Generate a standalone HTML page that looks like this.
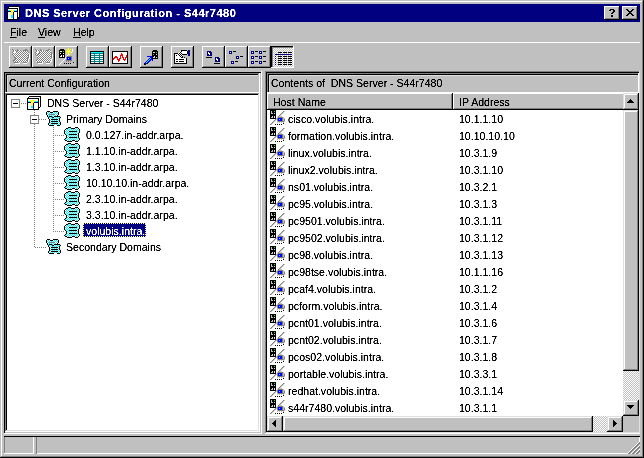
<!DOCTYPE html>
<html><head><meta charset="utf-8"><style>
html,body{margin:0;padding:0}
body{width:644px;height:458px;background:#c0c0c0;position:relative;overflow:hidden;font-family:"Liberation Sans",sans-serif}
body div,body span.t,body svg{position:absolute}
span.t{white-space:pre;line-height:normal;transform-origin:0 0;font-family:"Liberation Sans",sans-serif}
</style></head><body>
<svg style="left:0;top:0" width="0" height="0"><defs><pattern id="px0" width="2" height="2" patternUnits="userSpaceOnUse"><rect width="2" height="2" fill="#ffffff"/><rect width="1" height="1" fill="#00ffff"/><rect x="1" y="1" width="1" height="1" fill="#00ffff"/></pattern><pattern id="px1" width="2" height="2" patternUnits="userSpaceOnUse"><rect width="2" height="2" fill="#00ffff"/><rect width="1" height="1" fill="#ffffff"/><rect x="1" y="1" width="1" height="1" fill="#ffffff"/></pattern><pattern id="pz0" width="2" height="2" patternUnits="userSpaceOnUse"><rect width="2" height="2" fill="#c0c0c0"/><rect width="1" height="1" fill="#808080"/><rect x="1" y="1" width="1" height="1" fill="#808080"/></pattern><pattern id="pz1" width="2" height="2" patternUnits="userSpaceOnUse"><rect width="2" height="2" fill="#808080"/><rect width="1" height="1" fill="#c0c0c0"/><rect x="1" y="1" width="1" height="1" fill="#c0c0c0"/></pattern><pattern id="pq0" width="2" height="2" patternUnits="userSpaceOnUse"><rect width="2" height="2" fill="#ffffff"/><rect width="1" height="1" fill="#000000"/><rect x="1" y="1" width="1" height="1" fill="#000000"/></pattern><pattern id="pq1" width="2" height="2" patternUnits="userSpaceOnUse"><rect width="2" height="2" fill="#000000"/><rect width="1" height="1" fill="#ffffff"/><rect x="1" y="1" width="1" height="1" fill="#ffffff"/></pattern><pattern id="pm0" width="2" height="2" patternUnits="userSpaceOnUse"><rect width="2" height="2" fill="#ffffff"/><rect width="1" height="1" fill="#808080"/><rect x="1" y="1" width="1" height="1" fill="#808080"/></pattern><pattern id="pm1" width="2" height="2" patternUnits="userSpaceOnUse"><rect width="2" height="2" fill="#808080"/><rect width="1" height="1" fill="#ffffff"/><rect x="1" y="1" width="1" height="1" fill="#ffffff"/></pattern><pattern id="pW0" width="2" height="2" patternUnits="userSpaceOnUse"><rect width="2" height="2" fill="#c0c0c0"/><rect width="1" height="1" fill="#ffffff"/><rect x="1" y="1" width="1" height="1" fill="#ffffff"/></pattern><pattern id="pW1" width="2" height="2" patternUnits="userSpaceOnUse"><rect width="2" height="2" fill="#ffffff"/><rect width="1" height="1" fill="#c0c0c0"/><rect x="1" y="1" width="1" height="1" fill="#c0c0c0"/></pattern></defs></svg>
<svg style="left:0;top:0" width="0" height="0" shape-rendering="crispEdges"><defs><g id="s0"><rect x="0" y="0" width="1" height="1" fill="#808080"/><rect x="5" y="0" width="1" height="1" fill="#808080"/><rect x="13" y="0" width="2" height="1" fill="#808080"/><rect x="1" y="1" width="1" height="1" fill="#808080"/><rect x="2" y="1" width="1" height="1" fill="#ffffff"/><rect x="3" y="1" width="1" height="1" fill="#808080"/><rect x="5" y="1" width="2" height="1" fill="#808080"/><rect x="7" y="1" width="1" height="1" fill="#ffffff"/><rect x="8" y="1" width="1" height="1" fill="#808080"/><rect x="11" y="1" width="3" height="1" fill="#808080"/><rect x="14" y="1" width="1" height="1" fill="url(#pm1)"/><rect x="15" y="1" width="1" height="1" fill="#808080"/><rect x="1" y="2" width="1" height="1" fill="#808080"/><rect x="2" y="2" width="2" height="1" fill="#ffffff"/><rect x="4" y="2" width="1" height="1" fill="#808080"/><rect x="5" y="2" width="11" height="1" fill="url(#pm1)"/><rect x="0" y="3" width="1" height="1" fill="#808080"/><rect x="1" y="3" width="3" height="1" fill="#ffffff"/><rect x="4" y="3" width="1" height="1" fill="#808080"/><rect x="5" y="3" width="11" height="1" fill="url(#pm1)"/><rect x="16" y="3" width="1" height="1" fill="#808080"/><rect x="1" y="4" width="1" height="1" fill="#808080"/><rect x="2" y="4" width="1" height="1" fill="#ffffff"/><rect x="3" y="4" width="1" height="1" fill="#808080"/><rect x="4" y="4" width="13" height="1" fill="url(#pm1)"/><rect x="0" y="5" width="1" height="1" fill="#808080"/><rect x="1" y="5" width="1" height="1" fill="#ffffff"/><rect x="2" y="5" width="1" height="1" fill="#808080"/><rect x="3" y="5" width="13" height="1" fill="url(#pm1)"/><rect x="16" y="5" width="1" height="1" fill="#808080"/><rect x="17" y="5" width="1" height="1" fill="#ffffff"/><rect x="1" y="6" width="1" height="1" fill="#808080"/><rect x="2" y="6" width="14" height="1" fill="url(#pm1)"/><rect x="16" y="6" width="1" height="1" fill="#808080"/><rect x="17" y="6" width="1" height="1" fill="#ffffff"/><rect x="2" y="7" width="14" height="1" fill="url(#pm1)"/><rect x="16" y="7" width="1" height="1" fill="#808080"/><rect x="17" y="7" width="1" height="1" fill="#ffffff"/><rect x="2" y="8" width="1" height="1" fill="#808080"/><rect x="3" y="8" width="13" height="1" fill="url(#pm1)"/><rect x="16" y="8" width="1" height="1" fill="#808080"/><rect x="17" y="8" width="1" height="1" fill="#ffffff"/><rect x="3" y="9" width="1" height="1" fill="#808080"/><rect x="4" y="9" width="11" height="1" fill="url(#pm1)"/><rect x="15" y="9" width="1" height="1" fill="#808080"/><rect x="17" y="9" width="1" height="1" fill="#ffffff"/><rect x="2" y="10" width="1" height="1" fill="#808080"/><rect x="3" y="10" width="13" height="1" fill="url(#pm1)"/><rect x="16" y="10" width="1" height="1" fill="#ffffff"/><rect x="1" y="11" width="1" height="1" fill="#808080"/><rect x="2" y="11" width="13" height="1" fill="url(#pm1)"/><rect x="15" y="11" width="1" height="1" fill="#808080"/><rect x="16" y="11" width="1" height="1" fill="#ffffff"/><rect x="1" y="12" width="15" height="1" fill="url(#pm1)"/><rect x="16" y="12" width="1" height="1" fill="#ffffff"/><rect x="2" y="13" width="5" height="1" fill="#808080"/><rect x="7" y="13" width="1" height="1" fill="#ffffff"/><rect x="11" y="13" width="4" height="1" fill="#808080"/><rect x="15" y="13" width="1" height="1" fill="#ffffff"/><rect x="3" y="14" width="5" height="1" fill="#ffffff"/><rect x="11" y="14" width="4" height="1" fill="#ffffff"/></g><g id="s1"><rect x="0" y="0" width="1" height="1" fill="#808080"/><rect x="5" y="0" width="1" height="1" fill="#808080"/><rect x="13" y="0" width="2" height="1" fill="#808080"/><rect x="1" y="1" width="1" height="1" fill="#808080"/><rect x="2" y="1" width="1" height="1" fill="#ffffff"/><rect x="3" y="1" width="1" height="1" fill="#808080"/><rect x="5" y="1" width="2" height="1" fill="#808080"/><rect x="7" y="1" width="1" height="1" fill="#ffffff"/><rect x="8" y="1" width="1" height="1" fill="#808080"/><rect x="11" y="1" width="3" height="1" fill="#808080"/><rect x="14" y="1" width="1" height="1" fill="url(#pm0)"/><rect x="15" y="1" width="1" height="1" fill="#808080"/><rect x="1" y="2" width="1" height="1" fill="#808080"/><rect x="2" y="2" width="2" height="1" fill="#ffffff"/><rect x="4" y="2" width="1" height="1" fill="#808080"/><rect x="5" y="2" width="11" height="1" fill="url(#pm0)"/><rect x="0" y="3" width="1" height="1" fill="#808080"/><rect x="1" y="3" width="3" height="1" fill="#ffffff"/><rect x="4" y="3" width="1" height="1" fill="#808080"/><rect x="5" y="3" width="11" height="1" fill="url(#pm0)"/><rect x="16" y="3" width="1" height="1" fill="#808080"/><rect x="1" y="4" width="1" height="1" fill="#808080"/><rect x="2" y="4" width="1" height="1" fill="#ffffff"/><rect x="3" y="4" width="1" height="1" fill="#808080"/><rect x="4" y="4" width="13" height="1" fill="url(#pm0)"/><rect x="0" y="5" width="1" height="1" fill="#808080"/><rect x="1" y="5" width="1" height="1" fill="#ffffff"/><rect x="2" y="5" width="1" height="1" fill="#808080"/><rect x="3" y="5" width="13" height="1" fill="url(#pm0)"/><rect x="16" y="5" width="1" height="1" fill="#808080"/><rect x="17" y="5" width="1" height="1" fill="#ffffff"/><rect x="1" y="6" width="1" height="1" fill="#808080"/><rect x="2" y="6" width="14" height="1" fill="url(#pm0)"/><rect x="16" y="6" width="1" height="1" fill="#808080"/><rect x="17" y="6" width="1" height="1" fill="#ffffff"/><rect x="2" y="7" width="14" height="1" fill="url(#pm0)"/><rect x="16" y="7" width="1" height="1" fill="#808080"/><rect x="17" y="7" width="1" height="1" fill="#ffffff"/><rect x="2" y="8" width="1" height="1" fill="#808080"/><rect x="3" y="8" width="13" height="1" fill="url(#pm0)"/><rect x="16" y="8" width="1" height="1" fill="#808080"/><rect x="17" y="8" width="1" height="1" fill="#ffffff"/><rect x="3" y="9" width="1" height="1" fill="#808080"/><rect x="4" y="9" width="11" height="1" fill="url(#pm0)"/><rect x="15" y="9" width="1" height="1" fill="#808080"/><rect x="17" y="9" width="1" height="1" fill="#ffffff"/><rect x="2" y="10" width="1" height="1" fill="#808080"/><rect x="3" y="10" width="13" height="1" fill="url(#pm0)"/><rect x="16" y="10" width="1" height="1" fill="#ffffff"/><rect x="1" y="11" width="1" height="1" fill="#808080"/><rect x="2" y="11" width="13" height="1" fill="url(#pm0)"/><rect x="15" y="11" width="1" height="1" fill="#808080"/><rect x="16" y="11" width="1" height="1" fill="#ffffff"/><rect x="1" y="12" width="15" height="1" fill="url(#pm0)"/><rect x="16" y="12" width="1" height="1" fill="#ffffff"/><rect x="2" y="13" width="5" height="1" fill="#808080"/><rect x="7" y="13" width="1" height="1" fill="#ffffff"/><rect x="11" y="13" width="4" height="1" fill="#808080"/><rect x="15" y="13" width="1" height="1" fill="#ffffff"/><rect x="3" y="14" width="5" height="1" fill="#ffffff"/><rect x="11" y="14" width="4" height="1" fill="#ffffff"/></g><g id="s2"><rect x="2" y="0" width="3" height="1" fill="#000000"/><rect x="8" y="0" width="5" height="1" fill="#000000"/><rect x="1" y="1" width="1" height="1" fill="#000000"/><rect x="2" y="1" width="3" height="1" fill="url(#px0)"/><rect x="5" y="1" width="3" height="1" fill="#000000"/><rect x="8" y="1" width="5" height="1" fill="url(#px0)"/><rect x="13" y="1" width="1" height="1" fill="#000000"/><rect x="1" y="2" width="1" height="1" fill="#000000"/><rect x="2" y="2" width="11" height="1" fill="url(#px0)"/><rect x="13" y="2" width="1" height="1" fill="#000000"/><rect x="1" y="3" width="1" height="1" fill="#000000"/><rect x="2" y="3" width="2" height="1" fill="url(#px0)"/><rect x="4" y="3" width="6" height="1" fill="#808080"/><rect x="10" y="3" width="3" height="1" fill="url(#px0)"/><rect x="13" y="3" width="1" height="1" fill="#000000"/><rect x="2" y="4" width="1" height="1" fill="#000000"/><rect x="3" y="4" width="9" height="1" fill="url(#px0)"/><rect x="12" y="4" width="1" height="1" fill="#000000"/><rect x="2" y="5" width="1" height="1" fill="#000000"/><rect x="3" y="5" width="1" height="1" fill="url(#px0)"/><rect x="4" y="5" width="3" height="1" fill="#000000"/><rect x="7" y="5" width="2" height="1" fill="url(#px0)"/><rect x="9" y="5" width="6" height="1" fill="#000000"/><rect x="3" y="6" width="1" height="1" fill="#000000"/><rect x="4" y="6" width="3" height="1" fill="url(#px0)"/><rect x="7" y="6" width="2" height="1" fill="#000000"/><rect x="9" y="6" width="6" height="1" fill="url(#px0)"/><rect x="15" y="6" width="1" height="1" fill="#000000"/><rect x="3" y="7" width="1" height="1" fill="#000000"/><rect x="4" y="7" width="10" height="1" fill="url(#px0)"/><rect x="14" y="7" width="1" height="1" fill="#000000"/><rect x="4" y="8" width="1" height="1" fill="#000000"/><rect x="5" y="8" width="1" height="1" fill="url(#px0)"/><rect x="6" y="8" width="7" height="1" fill="#000000"/><rect x="13" y="8" width="1" height="1" fill="url(#px0)"/><rect x="14" y="8" width="1" height="1" fill="#000000"/><rect x="4" y="9" width="1" height="1" fill="#000000"/><rect x="5" y="9" width="9" height="1" fill="url(#px0)"/><rect x="14" y="9" width="1" height="1" fill="#000000"/><rect x="4" y="10" width="1" height="1" fill="#000000"/><rect x="5" y="10" width="1" height="1" fill="url(#px0)"/><rect x="6" y="10" width="7" height="1" fill="#000000"/><rect x="13" y="10" width="1" height="1" fill="url(#px0)"/><rect x="14" y="10" width="1" height="1" fill="#000000"/><rect x="4" y="11" width="1" height="1" fill="#000000"/><rect x="5" y="11" width="10" height="1" fill="url(#px0)"/><rect x="15" y="11" width="1" height="1" fill="#000000"/><rect x="3" y="12" width="1" height="1" fill="#000000"/><rect x="4" y="12" width="2" height="1" fill="url(#px0)"/><rect x="6" y="12" width="7" height="1" fill="#000000"/><rect x="13" y="12" width="2" height="1" fill="url(#px0)"/><rect x="15" y="12" width="1" height="1" fill="#000000"/><rect x="3" y="13" width="1" height="1" fill="#000000"/><rect x="4" y="13" width="11" height="1" fill="url(#px0)"/><rect x="15" y="13" width="1" height="1" fill="#000000"/><rect x="4" y="14" width="5" height="1" fill="#000000"/><rect x="12" y="14" width="3" height="1" fill="#000000"/></g><g id="s3"><rect x="4" y="0" width="3" height="1" fill="#000000"/><rect x="11" y="0" width="3" height="1" fill="#000000"/><rect x="2" y="1" width="2" height="1" fill="#000000"/><rect x="4" y="1" width="3" height="1" fill="url(#px1)"/><rect x="7" y="1" width="4" height="1" fill="#000000"/><rect x="11" y="1" width="3" height="1" fill="url(#px1)"/><rect x="14" y="1" width="1" height="1" fill="#000000"/><rect x="1" y="2" width="1" height="1" fill="#000000"/><rect x="2" y="2" width="13" height="1" fill="url(#px1)"/><rect x="15" y="2" width="1" height="1" fill="#000000"/><rect x="0" y="3" width="1" height="1" fill="#000000"/><rect x="1" y="3" width="14" height="1" fill="url(#px1)"/><rect x="15" y="3" width="1" height="1" fill="#000000"/><rect x="0" y="4" width="1" height="1" fill="#000000"/><rect x="1" y="4" width="4" height="1" fill="url(#px1)"/><rect x="5" y="4" width="8" height="1" fill="#000000"/><rect x="13" y="4" width="2" height="1" fill="url(#px1)"/><rect x="15" y="4" width="1" height="1" fill="#000000"/><rect x="0" y="5" width="1" height="1" fill="#000000"/><rect x="1" y="5" width="14" height="1" fill="url(#px1)"/><rect x="15" y="5" width="1" height="1" fill="#000000"/><rect x="0" y="6" width="1" height="1" fill="#000000"/><rect x="1" y="6" width="13" height="1" fill="url(#px1)"/><rect x="14" y="6" width="1" height="1" fill="#000000"/><rect x="1" y="7" width="1" height="1" fill="#000000"/><rect x="2" y="7" width="3" height="1" fill="url(#px1)"/><rect x="5" y="7" width="8" height="1" fill="#000000"/><rect x="13" y="7" width="1" height="1" fill="url(#px1)"/><rect x="14" y="7" width="1" height="1" fill="#000000"/><rect x="2" y="8" width="1" height="1" fill="#000000"/><rect x="3" y="8" width="11" height="1" fill="url(#px1)"/><rect x="14" y="8" width="1" height="1" fill="#000000"/><rect x="2" y="9" width="1" height="1" fill="#000000"/><rect x="3" y="9" width="11" height="1" fill="url(#px1)"/><rect x="14" y="9" width="1" height="1" fill="#000000"/><rect x="2" y="10" width="1" height="1" fill="#000000"/><rect x="3" y="10" width="2" height="1" fill="url(#px1)"/><rect x="5" y="10" width="8" height="1" fill="#000000"/><rect x="13" y="10" width="1" height="1" fill="url(#px1)"/><rect x="14" y="10" width="1" height="1" fill="#000000"/><rect x="1" y="11" width="1" height="1" fill="#000000"/><rect x="2" y="11" width="13" height="1" fill="url(#px1)"/><rect x="15" y="11" width="1" height="1" fill="#000000"/><rect x="0" y="12" width="1" height="1" fill="#000000"/><rect x="1" y="12" width="14" height="1" fill="url(#px1)"/><rect x="15" y="12" width="1" height="1" fill="#000000"/><rect x="1" y="13" width="2" height="1" fill="#000000"/><rect x="3" y="13" width="5" height="1" fill="url(#px1)"/><rect x="8" y="13" width="3" height="1" fill="#000000"/><rect x="11" y="13" width="3" height="1" fill="url(#px1)"/><rect x="14" y="13" width="1" height="1" fill="#000000"/><rect x="3" y="14" width="5" height="1" fill="#000000"/><rect x="11" y="14" width="3" height="1" fill="#000000"/></g><g id="s4"><rect x="0" y="0" width="6" height="1" fill="#000000"/><rect x="0" y="1" width="1" height="1" fill="#000000"/><rect x="1" y="1" width="1" height="1" fill="#c0c0c0"/><rect x="2" y="1" width="2" height="1" fill="#000000"/><rect x="4" y="1" width="1" height="1" fill="#00ff00"/><rect x="5" y="1" width="1" height="1" fill="#000000"/><rect x="13" y="1" width="1" height="1" fill="#808080"/><rect x="14" y="1" width="1" height="1" fill="#c0c0c0"/><rect x="0" y="2" width="1" height="1" fill="#000000"/><rect x="1" y="2" width="1" height="1" fill="#c0c0c0"/><rect x="2" y="2" width="4" height="1" fill="#000000"/><rect x="12" y="2" width="1" height="1" fill="#808080"/><rect x="13" y="2" width="1" height="1" fill="#c0c0c0"/><rect x="0" y="3" width="1" height="1" fill="#000000"/><rect x="1" y="3" width="2" height="1" fill="#c0c0c0"/><rect x="3" y="3" width="1" height="1" fill="#000000"/><rect x="4" y="3" width="1" height="1" fill="#dfdfdf"/><rect x="5" y="3" width="1" height="1" fill="#000000"/><rect x="11" y="3" width="1" height="1" fill="#808080"/><rect x="12" y="3" width="1" height="1" fill="#c0c0c0"/><rect x="0" y="4" width="6" height="1" fill="#000000"/><rect x="10" y="4" width="1" height="1" fill="#808080"/><rect x="11" y="4" width="1" height="1" fill="#c0c0c0"/><rect x="0" y="5" width="6" height="1" fill="#000000"/><rect x="9" y="5" width="1" height="1" fill="#808080"/><rect x="10" y="5" width="1" height="1" fill="#c0c0c0"/><rect x="0" y="6" width="2" height="1" fill="#000000"/><rect x="2" y="6" width="1" height="1" fill="#dfdfdf"/><rect x="3" y="6" width="1" height="1" fill="#000000"/><rect x="4" y="6" width="1" height="1" fill="#dfdfdf"/><rect x="5" y="6" width="1" height="1" fill="#000000"/><rect x="8" y="6" width="1" height="1" fill="#808080"/><rect x="9" y="6" width="3" height="1" fill="#c0c0c0"/><rect x="0" y="7" width="1" height="1" fill="#000000"/><rect x="1" y="7" width="2" height="1" fill="#c0c0c0"/><rect x="3" y="7" width="1" height="1" fill="#000000"/><rect x="4" y="7" width="1" height="1" fill="#dfdfdf"/><rect x="5" y="7" width="1" height="1" fill="#000000"/><rect x="7" y="7" width="1" height="1" fill="#c0c0c0"/><rect x="8" y="7" width="5" height="1" fill="#808080"/><rect x="13" y="7" width="1" height="1" fill="#c0c0c0"/><rect x="0" y="8" width="6" height="1" fill="#000000"/><rect x="6" y="8" width="1" height="1" fill="#c0c0c0"/><rect x="7" y="8" width="1" height="1" fill="#808080"/><rect x="8" y="8" width="4" height="1" fill="#0000ff"/><rect x="12" y="8" width="1" height="1" fill="#808080"/><rect x="13" y="8" width="2" height="1" fill="#c0c0c0"/><rect x="5" y="9" width="1" height="1" fill="#808080"/><rect x="6" y="9" width="1" height="1" fill="#c0c0c0"/><rect x="7" y="9" width="1" height="1" fill="#808080"/><rect x="8" y="9" width="1" height="1" fill="#0000ff"/><rect x="9" y="9" width="1" height="1" fill="#00ffff"/><rect x="10" y="9" width="2" height="1" fill="#0000ff"/><rect x="12" y="9" width="1" height="1" fill="#808080"/><rect x="13" y="9" width="1" height="1" fill="#c0c0c0"/><rect x="14" y="9" width="1" height="1" fill="#808080"/><rect x="4" y="10" width="1" height="1" fill="#808080"/><rect x="5" y="10" width="1" height="1" fill="#c0c0c0"/><rect x="7" y="10" width="1" height="1" fill="#808080"/><rect x="8" y="10" width="4" height="1" fill="#0000ff"/><rect x="12" y="10" width="1" height="1" fill="#808080"/><rect x="13" y="10" width="1" height="1" fill="#c0c0c0"/><rect x="14" y="10" width="1" height="1" fill="#808080"/><rect x="3" y="11" width="1" height="1" fill="#808080"/><rect x="4" y="11" width="1" height="1" fill="#c0c0c0"/><rect x="7" y="11" width="1" height="1" fill="#c0c0c0"/><rect x="8" y="11" width="6" height="1" fill="#808080"/><rect x="14" y="11" width="1" height="1" fill="#c0c0c0"/><rect x="2" y="12" width="1" height="1" fill="#808080"/><rect x="3" y="12" width="1" height="1" fill="#c0c0c0"/><rect x="7" y="12" width="1" height="1" fill="#c0c0c0"/><rect x="9" y="12" width="1" height="1" fill="#c0c0c0"/><rect x="11" y="12" width="1" height="1" fill="#c0c0c0"/><rect x="13" y="12" width="1" height="1" fill="#c0c0c0"/><rect x="1" y="13" width="1" height="1" fill="#808080"/><rect x="2" y="13" width="1" height="1" fill="#c0c0c0"/><rect x="13" y="13" width="1" height="1" fill="#000000"/><rect x="0" y="14" width="1" height="1" fill="#808080"/><rect x="1" y="14" width="1" height="1" fill="#c0c0c0"/><rect x="5" y="14" width="1" height="1" fill="#000000"/><rect x="7" y="14" width="1" height="1" fill="#000000"/><rect x="9" y="14" width="1" height="1" fill="#000000"/><rect x="11" y="14" width="1" height="1" fill="#000000"/></g><g id="s5"><rect x="0" y="0" width="6" height="1" fill="#000000"/><rect x="0" y="1" width="1" height="1" fill="#000000"/><rect x="1" y="1" width="1" height="1" fill="#c0c0c0"/><rect x="2" y="1" width="2" height="1" fill="#000000"/><rect x="4" y="1" width="1" height="1" fill="#00ff00"/><rect x="5" y="1" width="1" height="1" fill="#000000"/><rect x="13" y="1" width="1" height="1" fill="#808080"/><rect x="14" y="1" width="1" height="1" fill="#c0c0c0"/><rect x="0" y="2" width="1" height="1" fill="#000000"/><rect x="1" y="2" width="1" height="1" fill="#c0c0c0"/><rect x="2" y="2" width="4" height="1" fill="#000000"/><rect x="12" y="2" width="1" height="1" fill="#808080"/><rect x="13" y="2" width="1" height="1" fill="#c0c0c0"/><rect x="0" y="3" width="1" height="1" fill="#000000"/><rect x="1" y="3" width="2" height="1" fill="#c0c0c0"/><rect x="3" y="3" width="1" height="1" fill="#000000"/><rect x="4" y="3" width="1" height="1" fill="#dfdfdf"/><rect x="5" y="3" width="1" height="1" fill="#000000"/><rect x="11" y="3" width="1" height="1" fill="#808080"/><rect x="12" y="3" width="1" height="1" fill="#c0c0c0"/><rect x="0" y="4" width="6" height="1" fill="#000000"/><rect x="10" y="4" width="1" height="1" fill="#808080"/><rect x="11" y="4" width="1" height="1" fill="#c0c0c0"/><rect x="0" y="5" width="6" height="1" fill="#000000"/><rect x="9" y="5" width="1" height="1" fill="#808080"/><rect x="10" y="5" width="1" height="1" fill="#c0c0c0"/><rect x="0" y="6" width="2" height="1" fill="#000000"/><rect x="2" y="6" width="1" height="1" fill="#dfdfdf"/><rect x="3" y="6" width="1" height="1" fill="#000000"/><rect x="4" y="6" width="1" height="1" fill="#dfdfdf"/><rect x="5" y="6" width="1" height="1" fill="#000000"/><rect x="8" y="6" width="1" height="1" fill="#808080"/><rect x="9" y="6" width="3" height="1" fill="#c0c0c0"/><rect x="0" y="7" width="1" height="1" fill="#000000"/><rect x="1" y="7" width="2" height="1" fill="#c0c0c0"/><rect x="3" y="7" width="1" height="1" fill="#000000"/><rect x="4" y="7" width="1" height="1" fill="#dfdfdf"/><rect x="5" y="7" width="1" height="1" fill="#000000"/><rect x="7" y="7" width="1" height="1" fill="#c0c0c0"/><rect x="8" y="7" width="5" height="1" fill="#808080"/><rect x="13" y="7" width="1" height="1" fill="#c0c0c0"/><rect x="0" y="8" width="6" height="1" fill="#000000"/><rect x="6" y="8" width="1" height="1" fill="#c0c0c0"/><rect x="7" y="8" width="1" height="1" fill="#808080"/><rect x="8" y="8" width="4" height="1" fill="#0000ff"/><rect x="12" y="8" width="1" height="1" fill="#808080"/><rect x="13" y="8" width="2" height="1" fill="#c0c0c0"/><rect x="5" y="9" width="1" height="1" fill="#808080"/><rect x="6" y="9" width="1" height="1" fill="#c0c0c0"/><rect x="7" y="9" width="1" height="1" fill="#808080"/><rect x="8" y="9" width="1" height="1" fill="#0000ff"/><rect x="9" y="9" width="1" height="1" fill="#00ffff"/><rect x="10" y="9" width="2" height="1" fill="#0000ff"/><rect x="12" y="9" width="1" height="1" fill="#808080"/><rect x="13" y="9" width="1" height="1" fill="#c0c0c0"/><rect x="14" y="9" width="1" height="1" fill="#808080"/><rect x="4" y="10" width="1" height="1" fill="#808080"/><rect x="5" y="10" width="1" height="1" fill="#c0c0c0"/><rect x="7" y="10" width="1" height="1" fill="#808080"/><rect x="8" y="10" width="4" height="1" fill="#0000ff"/><rect x="12" y="10" width="1" height="1" fill="#808080"/><rect x="13" y="10" width="1" height="1" fill="#c0c0c0"/><rect x="14" y="10" width="1" height="1" fill="#808080"/><rect x="3" y="11" width="1" height="1" fill="#808080"/><rect x="4" y="11" width="1" height="1" fill="#c0c0c0"/><rect x="7" y="11" width="1" height="1" fill="#c0c0c0"/><rect x="8" y="11" width="6" height="1" fill="#808080"/><rect x="14" y="11" width="1" height="1" fill="#c0c0c0"/><rect x="2" y="12" width="1" height="1" fill="#808080"/><rect x="3" y="12" width="1" height="1" fill="#c0c0c0"/><rect x="7" y="12" width="1" height="1" fill="#c0c0c0"/><rect x="9" y="12" width="1" height="1" fill="#c0c0c0"/><rect x="11" y="12" width="1" height="1" fill="#c0c0c0"/><rect x="13" y="12" width="1" height="1" fill="#c0c0c0"/><rect x="1" y="13" width="1" height="1" fill="#808080"/><rect x="2" y="13" width="1" height="1" fill="#c0c0c0"/><rect x="13" y="13" width="1" height="1" fill="#000000"/><rect x="0" y="14" width="1" height="1" fill="#808080"/><rect x="1" y="14" width="1" height="1" fill="#c0c0c0"/><rect x="5" y="14" width="1" height="1" fill="#000000"/><rect x="7" y="14" width="1" height="1" fill="#000000"/><rect x="9" y="14" width="1" height="1" fill="#000000"/><rect x="11" y="14" width="1" height="1" fill="#000000"/></g></defs></svg>
<div style="left:1px;top:1px;width:642px;height:1px;background:#fff;"></div>
<div style="left:1px;top:1px;width:1px;height:456px;background:#fff;"></div>
<div style="left:1px;top:456px;width:642px;height:1px;background:#808080;"></div>
<div style="left:642px;top:1px;width:1px;height:456px;background:#808080;"></div>
<div style="left:0px;top:457px;width:644px;height:1px;background:#000;"></div>
<div style="left:643px;top:0px;width:1px;height:458px;background:#000;"></div>
<div style="left:4px;top:4px;width:636px;height:18px;background:#000080;"></div>
<svg style="left:7px;top:6px;" width="13" height="14" shape-rendering="crispEdges"><rect x="2" y="0" width="11" height="1" fill="#000000"/><rect x="1" y="1" width="1" height="1" fill="#000000"/><rect x="2" y="1" width="9" height="1" fill="#ffffff"/><rect x="11" y="1" width="1" height="1" fill="#dfdfdf"/><rect x="12" y="1" width="1" height="1" fill="#000000"/><rect x="0" y="2" width="11" height="1" fill="#000000"/><rect x="11" y="2" width="1" height="1" fill="#ffffff"/><rect x="12" y="2" width="1" height="1" fill="#000000"/><rect x="0" y="3" width="1" height="1" fill="#000000"/><rect x="1" y="3" width="9" height="1" fill="#ffffff"/><rect x="10" y="3" width="1" height="1" fill="#000000"/><rect x="11" y="3" width="1" height="1" fill="#ffffff"/><rect x="12" y="3" width="1" height="1" fill="#000000"/><rect x="0" y="4" width="1" height="1" fill="#000000"/><rect x="1" y="4" width="2" height="1" fill="#00ffff"/><rect x="3" y="4" width="2" height="1" fill="#ffff00"/><rect x="5" y="4" width="1" height="1" fill="#ffffff"/><rect x="6" y="4" width="1" height="1" fill="#ffff00"/><rect x="7" y="4" width="3" height="1" fill="#00ffff"/><rect x="10" y="4" width="1" height="1" fill="#000000"/><rect x="11" y="4" width="1" height="1" fill="#ffffff"/><rect x="12" y="4" width="1" height="1" fill="#000000"/><rect x="0" y="5" width="1" height="1" fill="#000000"/><rect x="1" y="5" width="3" height="1" fill="#000080"/><rect x="4" y="5" width="3" height="1" fill="#ffff00"/><rect x="7" y="5" width="3" height="1" fill="#000080"/><rect x="10" y="5" width="1" height="1" fill="#000000"/><rect x="11" y="5" width="1" height="1" fill="#ffffff"/><rect x="12" y="5" width="1" height="1" fill="#000000"/><rect x="0" y="6" width="1" height="1" fill="#000000"/><rect x="1" y="6" width="3" height="1" fill="#ffffff"/><rect x="4" y="6" width="2" height="1" fill="#ffff00"/><rect x="6" y="6" width="1" height="1" fill="#000080"/><rect x="7" y="6" width="3" height="1" fill="#ffffff"/><rect x="10" y="6" width="1" height="1" fill="#000000"/><rect x="11" y="6" width="1" height="1" fill="#ffffff"/><rect x="12" y="6" width="1" height="1" fill="#000000"/><rect x="0" y="7" width="1" height="1" fill="#000000"/><rect x="1" y="7" width="3" height="1" fill="#ffffff"/><rect x="4" y="7" width="2" height="1" fill="#ffff00"/><rect x="6" y="7" width="1" height="1" fill="#000080"/><rect x="7" y="7" width="3" height="1" fill="#ffffff"/><rect x="10" y="7" width="1" height="1" fill="#000000"/><rect x="11" y="7" width="1" height="1" fill="#ffffff"/><rect x="12" y="7" width="1" height="1" fill="#000000"/><rect x="0" y="8" width="1" height="1" fill="#000000"/><rect x="1" y="8" width="3" height="1" fill="#ffffff"/><rect x="4" y="8" width="2" height="1" fill="#ffff00"/><rect x="6" y="8" width="1" height="1" fill="#000080"/><rect x="7" y="8" width="3" height="1" fill="#ffffff"/><rect x="10" y="8" width="1" height="1" fill="#000000"/><rect x="11" y="8" width="1" height="1" fill="#ffffff"/><rect x="12" y="8" width="1" height="1" fill="#000000"/><rect x="0" y="9" width="1" height="1" fill="#000000"/><rect x="1" y="9" width="3" height="1" fill="#ffffff"/><rect x="4" y="9" width="2" height="1" fill="#00ffff"/><rect x="6" y="9" width="1" height="1" fill="#000080"/><rect x="7" y="9" width="3" height="1" fill="#ffffff"/><rect x="10" y="9" width="1" height="1" fill="#000000"/><rect x="11" y="9" width="1" height="1" fill="#ffffff"/><rect x="12" y="9" width="1" height="1" fill="#000000"/><rect x="0" y="10" width="1" height="1" fill="#000000"/><rect x="1" y="10" width="3" height="1" fill="#ffffff"/><rect x="4" y="10" width="2" height="1" fill="#00ffff"/><rect x="6" y="10" width="1" height="1" fill="#000080"/><rect x="7" y="10" width="3" height="1" fill="#ffffff"/><rect x="10" y="10" width="1" height="1" fill="#000000"/><rect x="11" y="10" width="1" height="1" fill="#ffffff"/><rect x="12" y="10" width="1" height="1" fill="#000000"/><rect x="0" y="11" width="1" height="1" fill="#000000"/><rect x="1" y="11" width="3" height="1" fill="#ffffff"/><rect x="4" y="11" width="2" height="1" fill="#00ffff"/><rect x="6" y="11" width="1" height="1" fill="#000080"/><rect x="7" y="11" width="3" height="1" fill="#ffffff"/><rect x="10" y="11" width="2" height="1" fill="#000000"/><rect x="0" y="12" width="1" height="1" fill="#000000"/><rect x="1" y="12" width="5" height="1" fill="#ffffff"/><rect x="6" y="12" width="1" height="1" fill="#000080"/><rect x="7" y="12" width="3" height="1" fill="#ffffff"/><rect x="10" y="12" width="1" height="1" fill="#000000"/><rect x="0" y="13" width="11" height="1" fill="#000000"/></svg>
<div style="left:604px;top:6px;width:16px;height:14px;background:#c0c0c0;"></div>
<div style="left:604px;top:6px;width:16px;height:1px;background:#fff;"></div>
<div style="left:604px;top:6px;width:1px;height:14px;background:#fff;"></div>
<div style="left:604px;top:19px;width:16px;height:1px;background:#000;"></div>
<div style="left:619px;top:6px;width:1px;height:14px;background:#000;"></div>
<div style="left:605px;top:18px;width:14px;height:1px;background:#808080;"></div>
<div style="left:618px;top:7px;width:1px;height:12px;background:#808080;"></div>
<div style="left:622px;top:6px;width:16px;height:14px;background:#c0c0c0;"></div>
<div style="left:622px;top:6px;width:16px;height:1px;background:#fff;"></div>
<div style="left:622px;top:6px;width:1px;height:14px;background:#fff;"></div>
<div style="left:622px;top:19px;width:16px;height:1px;background:#000;"></div>
<div style="left:637px;top:6px;width:1px;height:14px;background:#000;"></div>
<div style="left:623px;top:18px;width:14px;height:1px;background:#808080;"></div>
<div style="left:636px;top:7px;width:1px;height:12px;background:#808080;"></div>
<svg style="left:609px;top:9px;" width="6" height="8" shape-rendering="crispEdges"><rect x="1" y="0" width="4" height="1" fill="#000000"/><rect x="0" y="1" width="2" height="1" fill="#000000"/><rect x="4" y="1" width="2" height="1" fill="#000000"/><rect x="4" y="2" width="2" height="1" fill="#000000"/><rect x="3" y="3" width="2" height="1" fill="#000000"/><rect x="2" y="4" width="2" height="1" fill="#000000"/><rect x="2" y="6" width="2" height="1" fill="#000000"/><rect x="2" y="7" width="2" height="1" fill="#000000"/></svg>
<svg style="left:626px;top:9px;" width="8" height="7" shape-rendering="crispEdges"><rect x="0" y="0" width="2" height="1" fill="#000000"/><rect x="6" y="0" width="2" height="1" fill="#000000"/><rect x="1" y="1" width="2" height="1" fill="#000000"/><rect x="5" y="1" width="2" height="1" fill="#000000"/><rect x="2" y="2" width="4" height="1" fill="#000000"/><rect x="3" y="3" width="2" height="1" fill="#000000"/><rect x="2" y="4" width="4" height="1" fill="#000000"/><rect x="1" y="5" width="2" height="1" fill="#000000"/><rect x="5" y="5" width="2" height="1" fill="#000000"/><rect x="0" y="6" width="2" height="1" fill="#000000"/><rect x="6" y="6" width="2" height="1" fill="#000000"/></svg>
<div style="left:4px;top:42px;width:636px;height:1px;background:#fff;"></div>
<div style="left:9px;top:46px;width:23px;height:22px;background:#c0c0c0;"></div>
<div style="left:9px;top:46px;width:23px;height:1px;background:#fff;"></div>
<div style="left:9px;top:46px;width:1px;height:22px;background:#fff;"></div>
<div style="left:9px;top:67px;width:23px;height:1px;background:#000;"></div>
<div style="left:31px;top:46px;width:1px;height:22px;background:#000;"></div>
<div style="left:10px;top:66px;width:21px;height:1px;background:#808080;"></div>
<div style="left:30px;top:47px;width:1px;height:20px;background:#808080;"></div>
<div style="left:32px;top:46px;width:23px;height:22px;background:#c0c0c0;"></div>
<div style="left:32px;top:46px;width:23px;height:1px;background:#fff;"></div>
<div style="left:32px;top:46px;width:1px;height:22px;background:#fff;"></div>
<div style="left:32px;top:67px;width:23px;height:1px;background:#000;"></div>
<div style="left:54px;top:46px;width:1px;height:22px;background:#000;"></div>
<div style="left:33px;top:66px;width:21px;height:1px;background:#808080;"></div>
<div style="left:53px;top:47px;width:1px;height:20px;background:#808080;"></div>
<div style="left:55px;top:46px;width:23px;height:22px;background:#c0c0c0;"></div>
<div style="left:55px;top:46px;width:23px;height:1px;background:#fff;"></div>
<div style="left:55px;top:46px;width:1px;height:22px;background:#fff;"></div>
<div style="left:55px;top:67px;width:23px;height:1px;background:#000;"></div>
<div style="left:77px;top:46px;width:1px;height:22px;background:#000;"></div>
<div style="left:56px;top:66px;width:21px;height:1px;background:#808080;"></div>
<div style="left:76px;top:47px;width:1px;height:20px;background:#808080;"></div>
<div style="left:86px;top:46px;width:23px;height:22px;background:#c0c0c0;"></div>
<div style="left:86px;top:46px;width:23px;height:1px;background:#fff;"></div>
<div style="left:86px;top:46px;width:1px;height:22px;background:#fff;"></div>
<div style="left:86px;top:67px;width:23px;height:1px;background:#000;"></div>
<div style="left:108px;top:46px;width:1px;height:22px;background:#000;"></div>
<div style="left:87px;top:66px;width:21px;height:1px;background:#808080;"></div>
<div style="left:107px;top:47px;width:1px;height:20px;background:#808080;"></div>
<div style="left:109px;top:46px;width:23px;height:22px;background:#c0c0c0;"></div>
<div style="left:109px;top:46px;width:23px;height:1px;background:#fff;"></div>
<div style="left:109px;top:46px;width:1px;height:22px;background:#fff;"></div>
<div style="left:109px;top:67px;width:23px;height:1px;background:#000;"></div>
<div style="left:131px;top:46px;width:1px;height:22px;background:#000;"></div>
<div style="left:110px;top:66px;width:21px;height:1px;background:#808080;"></div>
<div style="left:130px;top:47px;width:1px;height:20px;background:#808080;"></div>
<div style="left:140px;top:46px;width:23px;height:22px;background:#c0c0c0;"></div>
<div style="left:140px;top:46px;width:23px;height:1px;background:#fff;"></div>
<div style="left:140px;top:46px;width:1px;height:22px;background:#fff;"></div>
<div style="left:140px;top:67px;width:23px;height:1px;background:#000;"></div>
<div style="left:162px;top:46px;width:1px;height:22px;background:#000;"></div>
<div style="left:141px;top:66px;width:21px;height:1px;background:#808080;"></div>
<div style="left:161px;top:47px;width:1px;height:20px;background:#808080;"></div>
<div style="left:171px;top:46px;width:23px;height:22px;background:#c0c0c0;"></div>
<div style="left:171px;top:46px;width:23px;height:1px;background:#fff;"></div>
<div style="left:171px;top:46px;width:1px;height:22px;background:#fff;"></div>
<div style="left:171px;top:67px;width:23px;height:1px;background:#000;"></div>
<div style="left:193px;top:46px;width:1px;height:22px;background:#000;"></div>
<div style="left:172px;top:66px;width:21px;height:1px;background:#808080;"></div>
<div style="left:192px;top:47px;width:1px;height:20px;background:#808080;"></div>
<div style="left:202px;top:46px;width:23px;height:22px;background:#c0c0c0;"></div>
<div style="left:202px;top:46px;width:23px;height:1px;background:#fff;"></div>
<div style="left:202px;top:46px;width:1px;height:22px;background:#fff;"></div>
<div style="left:202px;top:67px;width:23px;height:1px;background:#000;"></div>
<div style="left:224px;top:46px;width:1px;height:22px;background:#000;"></div>
<div style="left:203px;top:66px;width:21px;height:1px;background:#808080;"></div>
<div style="left:223px;top:47px;width:1px;height:20px;background:#808080;"></div>
<div style="left:225px;top:46px;width:23px;height:22px;background:#c0c0c0;"></div>
<div style="left:225px;top:46px;width:23px;height:1px;background:#fff;"></div>
<div style="left:225px;top:46px;width:1px;height:22px;background:#fff;"></div>
<div style="left:225px;top:67px;width:23px;height:1px;background:#000;"></div>
<div style="left:247px;top:46px;width:1px;height:22px;background:#000;"></div>
<div style="left:226px;top:66px;width:21px;height:1px;background:#808080;"></div>
<div style="left:246px;top:47px;width:1px;height:20px;background:#808080;"></div>
<div style="left:248px;top:46px;width:23px;height:22px;background:#c0c0c0;"></div>
<div style="left:248px;top:46px;width:23px;height:1px;background:#fff;"></div>
<div style="left:248px;top:46px;width:1px;height:22px;background:#fff;"></div>
<div style="left:248px;top:67px;width:23px;height:1px;background:#000;"></div>
<div style="left:270px;top:46px;width:1px;height:22px;background:#000;"></div>
<div style="left:249px;top:66px;width:21px;height:1px;background:#808080;"></div>
<div style="left:269px;top:47px;width:1px;height:20px;background:#808080;"></div>
<svg style="left:272px;top:48px" width="21" height="19" shape-rendering="crispEdges"><rect width="21" height="19" fill="url(#pW0)"/></svg>
<div style="left:271px;top:46px;width:23px;height:1px;background:#000;"></div>
<div style="left:271px;top:46px;width:1px;height:22px;background:#000;"></div>
<div style="left:272px;top:47px;width:21px;height:1px;background:#808080;"></div>
<div style="left:272px;top:47px;width:1px;height:20px;background:#808080;"></div>
<div style="left:271px;top:67px;width:23px;height:1px;background:#fff;"></div>
<div style="left:293px;top:46px;width:1px;height:22px;background:#fff;"></div>
<svg style="left:12px;top:49px" width="18" height="15" shape-rendering="crispEdges"><use href="#s0"/></svg>
<svg style="left:35px;top:49px" width="18" height="15" shape-rendering="crispEdges"><use href="#s1"/></svg>
<svg style="left:56px;top:46px;" width="22" height="19" shape-rendering="crispEdges"><rect x="12" y="2" width="1" height="1" fill="#ffff00"/><rect x="4" y="3" width="4" height="1" fill="#000000"/><rect x="10" y="3" width="1" height="1" fill="#ffff00"/><rect x="12" y="3" width="1" height="1" fill="#ffff00"/><rect x="14" y="3" width="1" height="1" fill="#ffff00"/><rect x="16" y="3" width="1" height="1" fill="#ffffff"/><rect x="3" y="4" width="6" height="1" fill="#000000"/><rect x="11" y="4" width="3" height="1" fill="#ffff00"/><rect x="16" y="4" width="1" height="1" fill="#ffffff"/><rect x="3" y="5" width="1" height="1" fill="#000000"/><rect x="4" y="5" width="2" height="1" fill="#ffffff"/><rect x="6" y="5" width="1" height="1" fill="#000000"/><rect x="7" y="5" width="1" height="1" fill="#00ff00"/><rect x="8" y="5" width="1" height="1" fill="#000000"/><rect x="10" y="5" width="2" height="1" fill="#ffff00"/><rect x="12" y="5" width="1" height="1" fill="#ffffff"/><rect x="13" y="5" width="2" height="1" fill="#ffff00"/><rect x="16" y="5" width="1" height="1" fill="#ffffff"/><rect x="3" y="6" width="6" height="1" fill="#000000"/><rect x="11" y="6" width="3" height="1" fill="#ffff00"/><rect x="15" y="6" width="1" height="1" fill="#ffffff"/><rect x="3" y="7" width="1" height="1" fill="#000000"/><rect x="4" y="7" width="1" height="1" fill="#ffffff"/><rect x="5" y="7" width="2" height="1" fill="#000000"/><rect x="7" y="7" width="1" height="1" fill="#ffffff"/><rect x="8" y="7" width="1" height="1" fill="#000000"/><rect x="10" y="7" width="1" height="1" fill="#ffff00"/><rect x="12" y="7" width="1" height="1" fill="#ffff00"/><rect x="14" y="7" width="1" height="1" fill="#ffff00"/><rect x="3" y="8" width="6" height="1" fill="#000000"/><rect x="12" y="8" width="1" height="1" fill="#ffffff"/><rect x="13" y="8" width="1" height="1" fill="#ffff00"/><rect x="3" y="9" width="2" height="1" fill="#000000"/><rect x="5" y="9" width="1" height="1" fill="#ffffff"/><rect x="6" y="9" width="1" height="1" fill="#000000"/><rect x="7" y="9" width="1" height="1" fill="#ffffff"/><rect x="8" y="9" width="1" height="1" fill="#000000"/><rect x="11" y="9" width="1" height="1" fill="#ffffff"/><rect x="3" y="10" width="1" height="1" fill="#000000"/><rect x="4" y="10" width="2" height="1" fill="#ffffff"/><rect x="6" y="10" width="1" height="1" fill="#000000"/><rect x="7" y="10" width="1" height="1" fill="#ffffff"/><rect x="8" y="10" width="1" height="1" fill="#000000"/><rect x="10" y="10" width="1" height="1" fill="#c0c0c0"/><rect x="11" y="10" width="5" height="1" fill="#808080"/><rect x="16" y="10" width="1" height="1" fill="#c0c0c0"/><rect x="3" y="11" width="6" height="1" fill="#000000"/><rect x="9" y="11" width="1" height="1" fill="#ffffff"/><rect x="10" y="11" width="1" height="1" fill="#808080"/><rect x="11" y="11" width="4" height="1" fill="#0000ff"/><rect x="15" y="11" width="1" height="1" fill="#808080"/><rect x="16" y="11" width="2" height="1" fill="#c0c0c0"/><rect x="9" y="12" width="1" height="1" fill="#ffffff"/><rect x="10" y="12" width="1" height="1" fill="#808080"/><rect x="11" y="12" width="1" height="1" fill="#0000ff"/><rect x="12" y="12" width="1" height="1" fill="#00ffff"/><rect x="13" y="12" width="2" height="1" fill="#0000ff"/><rect x="15" y="12" width="1" height="1" fill="#808080"/><rect x="16" y="12" width="2" height="1" fill="#c0c0c0"/><rect x="8" y="13" width="1" height="1" fill="#ffffff"/><rect x="9" y="13" width="1" height="1" fill="#c0c0c0"/><rect x="10" y="13" width="1" height="1" fill="#808080"/><rect x="11" y="13" width="4" height="1" fill="#0000ff"/><rect x="15" y="13" width="1" height="1" fill="#808080"/><rect x="16" y="13" width="2" height="1" fill="#c0c0c0"/><rect x="7" y="14" width="1" height="1" fill="#ffffff"/><rect x="9" y="14" width="1" height="1" fill="#c0c0c0"/><rect x="10" y="14" width="6" height="1" fill="#808080"/><rect x="16" y="14" width="1" height="1" fill="#c0c0c0"/><rect x="6" y="15" width="1" height="1" fill="#ffffff"/><rect x="10" y="15" width="1" height="1" fill="#808080"/><rect x="12" y="15" width="1" height="1" fill="#808080"/><rect x="14" y="15" width="1" height="1" fill="#808080"/><rect x="5" y="16" width="1" height="1" fill="#ffffff"/><rect x="17" y="16" width="1" height="1" fill="#000000"/><rect x="4" y="17" width="1" height="1" fill="#ffffff"/><rect x="8" y="17" width="1" height="1" fill="#000000"/><rect x="10" y="17" width="1" height="1" fill="#000000"/><rect x="12" y="17" width="1" height="1" fill="#000000"/><rect x="14" y="17" width="1" height="1" fill="#000000"/><rect x="3" y="18" width="1" height="1" fill="#ffffff"/></svg>
<svg style="left:90px;top:51px;" width="14" height="13" shape-rendering="crispEdges"><rect x="0" y="0" width="14" height="1" fill="#000000"/><rect x="0" y="1" width="1" height="1" fill="#000000"/><rect x="1" y="1" width="12" height="1" fill="#00ffff"/><rect x="13" y="1" width="1" height="1" fill="#000000"/><rect x="0" y="2" width="1" height="1" fill="#000000"/><rect x="1" y="2" width="12" height="1" fill="#008080"/><rect x="13" y="2" width="1" height="1" fill="#000000"/><rect x="0" y="3" width="1" height="1" fill="#000000"/><rect x="1" y="3" width="3" height="1" fill="#ffffff"/><rect x="4" y="3" width="1" height="1" fill="#008080"/><rect x="5" y="3" width="4" height="1" fill="#ffffff"/><rect x="9" y="3" width="1" height="1" fill="#008080"/><rect x="10" y="3" width="3" height="1" fill="#ffffff"/><rect x="13" y="3" width="1" height="1" fill="#000000"/><rect x="0" y="4" width="1" height="1" fill="#000000"/><rect x="1" y="4" width="12" height="1" fill="#008080"/><rect x="13" y="4" width="1" height="1" fill="#000000"/><rect x="0" y="5" width="1" height="1" fill="#000000"/><rect x="1" y="5" width="3" height="1" fill="#ffffff"/><rect x="4" y="5" width="1" height="1" fill="#008080"/><rect x="5" y="5" width="4" height="1" fill="#ffffff"/><rect x="9" y="5" width="1" height="1" fill="#008080"/><rect x="10" y="5" width="3" height="1" fill="#ffffff"/><rect x="13" y="5" width="1" height="1" fill="#000000"/><rect x="0" y="6" width="1" height="1" fill="#000000"/><rect x="1" y="6" width="12" height="1" fill="#008080"/><rect x="13" y="6" width="1" height="1" fill="#000000"/><rect x="0" y="7" width="1" height="1" fill="#000000"/><rect x="1" y="7" width="3" height="1" fill="#ffffff"/><rect x="4" y="7" width="1" height="1" fill="#008080"/><rect x="5" y="7" width="4" height="1" fill="#ffffff"/><rect x="9" y="7" width="1" height="1" fill="#008080"/><rect x="10" y="7" width="3" height="1" fill="#ffffff"/><rect x="13" y="7" width="1" height="1" fill="#000000"/><rect x="0" y="8" width="1" height="1" fill="#000000"/><rect x="1" y="8" width="12" height="1" fill="#008080"/><rect x="13" y="8" width="1" height="1" fill="#000000"/><rect x="0" y="9" width="1" height="1" fill="#000000"/><rect x="1" y="9" width="3" height="1" fill="#ffffff"/><rect x="4" y="9" width="1" height="1" fill="#008080"/><rect x="5" y="9" width="4" height="1" fill="#ffffff"/><rect x="9" y="9" width="1" height="1" fill="#008080"/><rect x="10" y="9" width="3" height="1" fill="#ffffff"/><rect x="13" y="9" width="1" height="1" fill="#000000"/><rect x="0" y="10" width="1" height="1" fill="#000000"/><rect x="1" y="10" width="12" height="1" fill="#008080"/><rect x="13" y="10" width="1" height="1" fill="#000000"/><rect x="0" y="11" width="1" height="1" fill="#000000"/><rect x="1" y="11" width="3" height="1" fill="#ffffff"/><rect x="4" y="11" width="1" height="1" fill="#008080"/><rect x="5" y="11" width="4" height="1" fill="#ffffff"/><rect x="9" y="11" width="1" height="1" fill="#008080"/><rect x="10" y="11" width="3" height="1" fill="#ffffff"/><rect x="13" y="11" width="1" height="1" fill="#000000"/><rect x="0" y="12" width="14" height="1" fill="#000000"/></svg>
<svg style="left:112px;top:51px;" width="16" height="13" shape-rendering="crispEdges"><rect x="0" y="0" width="16" height="1" fill="#000000"/><rect x="0" y="1" width="1" height="1" fill="#000000"/><rect x="1" y="1" width="14" height="1" fill="#ffffff"/><rect x="15" y="1" width="1" height="1" fill="#000000"/><rect x="0" y="2" width="1" height="1" fill="#000000"/><rect x="1" y="2" width="8" height="1" fill="#ffffff"/><rect x="9" y="2" width="1" height="1" fill="#ff0000"/><rect x="10" y="2" width="5" height="1" fill="#ffffff"/><rect x="15" y="2" width="1" height="1" fill="#000000"/><rect x="0" y="3" width="1" height="1" fill="#000000"/><rect x="1" y="3" width="8" height="1" fill="#ffffff"/><rect x="9" y="3" width="2" height="1" fill="#ff0000"/><rect x="11" y="3" width="4" height="1" fill="#ffffff"/><rect x="15" y="3" width="1" height="1" fill="#000000"/><rect x="0" y="4" width="1" height="1" fill="#000000"/><rect x="1" y="4" width="7" height="1" fill="#ffffff"/><rect x="8" y="4" width="3" height="1" fill="#ff0000"/><rect x="11" y="4" width="3" height="1" fill="#ffffff"/><rect x="14" y="4" width="1" height="1" fill="#ff0000"/><rect x="15" y="4" width="1" height="1" fill="#000000"/><rect x="0" y="5" width="1" height="1" fill="#000000"/><rect x="1" y="5" width="2" height="1" fill="#ffffff"/><rect x="3" y="5" width="2" height="1" fill="#ff0000"/><rect x="5" y="5" width="3" height="1" fill="#ffffff"/><rect x="8" y="5" width="1" height="1" fill="#ff0000"/><rect x="9" y="5" width="1" height="1" fill="#ffffff"/><rect x="10" y="5" width="1" height="1" fill="#ff0000"/><rect x="11" y="5" width="3" height="1" fill="#ffffff"/><rect x="14" y="5" width="1" height="1" fill="#ff0000"/><rect x="15" y="5" width="1" height="1" fill="#000000"/><rect x="0" y="6" width="1" height="1" fill="#000000"/><rect x="1" y="6" width="1" height="1" fill="#ffffff"/><rect x="2" y="6" width="4" height="1" fill="#ff0000"/><rect x="6" y="6" width="2" height="1" fill="#ffffff"/><rect x="8" y="6" width="1" height="1" fill="#ff0000"/><rect x="9" y="6" width="1" height="1" fill="#ffffff"/><rect x="10" y="6" width="2" height="1" fill="#ff0000"/><rect x="12" y="6" width="1" height="1" fill="#ffffff"/><rect x="13" y="6" width="2" height="1" fill="#ff0000"/><rect x="15" y="6" width="1" height="1" fill="#000000"/><rect x="0" y="7" width="1" height="1" fill="#000000"/><rect x="1" y="7" width="2" height="1" fill="#ff0000"/><rect x="3" y="7" width="2" height="1" fill="#ffffff"/><rect x="5" y="7" width="1" height="1" fill="#ff0000"/><rect x="6" y="7" width="1" height="1" fill="#ffffff"/><rect x="7" y="7" width="2" height="1" fill="#ff0000"/><rect x="9" y="7" width="2" height="1" fill="#ffffff"/><rect x="11" y="7" width="1" height="1" fill="#ff0000"/><rect x="12" y="7" width="1" height="1" fill="#ffffff"/><rect x="13" y="7" width="1" height="1" fill="#ff0000"/><rect x="14" y="7" width="1" height="1" fill="#ffffff"/><rect x="15" y="7" width="1" height="1" fill="#000000"/><rect x="0" y="8" width="1" height="1" fill="#000000"/><rect x="1" y="8" width="1" height="1" fill="#ff0000"/><rect x="2" y="8" width="3" height="1" fill="#ffffff"/><rect x="5" y="8" width="3" height="1" fill="#ff0000"/><rect x="8" y="8" width="3" height="1" fill="#ffffff"/><rect x="11" y="8" width="3" height="1" fill="#ff0000"/><rect x="14" y="8" width="1" height="1" fill="#ffffff"/><rect x="15" y="8" width="1" height="1" fill="#000000"/><rect x="0" y="9" width="1" height="1" fill="#000000"/><rect x="1" y="9" width="5" height="1" fill="#ffffff"/><rect x="6" y="9" width="2" height="1" fill="#ff0000"/><rect x="8" y="9" width="4" height="1" fill="#ffffff"/><rect x="12" y="9" width="1" height="1" fill="#ff0000"/><rect x="13" y="9" width="2" height="1" fill="#ffffff"/><rect x="15" y="9" width="1" height="1" fill="#000000"/><rect x="0" y="10" width="1" height="1" fill="#000000"/><rect x="1" y="10" width="5" height="1" fill="#ffffff"/><rect x="6" y="10" width="1" height="1" fill="#ff0000"/><rect x="7" y="10" width="8" height="1" fill="#ffffff"/><rect x="15" y="10" width="1" height="1" fill="#000000"/><rect x="0" y="11" width="1" height="1" fill="#000000"/><rect x="1" y="11" width="14" height="1" fill="#ffffff"/><rect x="15" y="11" width="1" height="1" fill="#000000"/><rect x="0" y="12" width="16" height="1" fill="#000000"/></svg>
<svg style="left:142px;top:48px;" width="16" height="17" shape-rendering="crispEdges"><rect x="11" y="2" width="4" height="1" fill="#000000"/><rect x="10" y="3" width="6" height="1" fill="#000000"/><rect x="10" y="4" width="1" height="1" fill="#000000"/><rect x="11" y="4" width="2" height="1" fill="#dfdfdf"/><rect x="13" y="4" width="1" height="1" fill="#000000"/><rect x="14" y="4" width="1" height="1" fill="#00ff00"/><rect x="15" y="4" width="1" height="1" fill="#000000"/><rect x="10" y="5" width="6" height="1" fill="#000000"/><rect x="10" y="6" width="1" height="1" fill="#000000"/><rect x="11" y="6" width="1" height="1" fill="#808080"/><rect x="12" y="6" width="2" height="1" fill="#000000"/><rect x="14" y="6" width="1" height="1" fill="#dfdfdf"/><rect x="15" y="6" width="1" height="1" fill="#000000"/><rect x="10" y="7" width="6" height="1" fill="#000000"/><rect x="5" y="8" width="5" height="1" fill="#0000ff"/><rect x="10" y="8" width="2" height="1" fill="#000000"/><rect x="12" y="8" width="1" height="1" fill="#dfdfdf"/><rect x="13" y="8" width="3" height="1" fill="#000000"/><rect x="8" y="9" width="2" height="1" fill="#0000ff"/><rect x="10" y="9" width="1" height="1" fill="#000000"/><rect x="11" y="9" width="2" height="1" fill="#dfdfdf"/><rect x="13" y="9" width="1" height="1" fill="#000000"/><rect x="14" y="9" width="1" height="1" fill="#dfdfdf"/><rect x="15" y="9" width="1" height="1" fill="#000000"/><rect x="7" y="10" width="1" height="1" fill="#0000ff"/><rect x="8" y="10" width="1" height="1" fill="#00ffff"/><rect x="9" y="10" width="1" height="1" fill="#0000ff"/><rect x="10" y="10" width="6" height="1" fill="#000000"/><rect x="6" y="11" width="1" height="1" fill="#0000ff"/><rect x="7" y="11" width="1" height="1" fill="#00ffff"/><rect x="8" y="11" width="3" height="1" fill="#0000ff"/><rect x="5" y="12" width="1" height="1" fill="#0000ff"/><rect x="6" y="12" width="1" height="1" fill="#00ffff"/><rect x="7" y="12" width="2" height="1" fill="#0000ff"/><rect x="10" y="12" width="1" height="1" fill="#0000ff"/><rect x="4" y="13" width="1" height="1" fill="#0000ff"/><rect x="5" y="13" width="1" height="1" fill="#00ffff"/><rect x="6" y="13" width="2" height="1" fill="#0000ff"/><rect x="3" y="14" width="1" height="1" fill="#0000ff"/><rect x="4" y="14" width="1" height="1" fill="#00ffff"/><rect x="5" y="14" width="2" height="1" fill="#0000ff"/><rect x="2" y="15" width="1" height="1" fill="#000000"/><rect x="3" y="15" width="2" height="1" fill="#0000ff"/><rect x="5" y="15" width="1" height="1" fill="#000000"/><rect x="2" y="16" width="2" height="1" fill="#000000"/></svg>
<svg style="left:174px;top:50px;" width="16" height="14" shape-rendering="crispEdges"><rect x="7" y="0" width="6" height="1" fill="#000000"/><rect x="14" y="0" width="2" height="1" fill="#000080"/><rect x="6" y="1" width="2" height="1" fill="url(#pq0)"/><rect x="8" y="1" width="5" height="1" fill="#ffffff"/><rect x="13" y="1" width="1" height="1" fill="#000000"/><rect x="14" y="1" width="2" height="1" fill="#000080"/><rect x="5" y="2" width="3" height="1" fill="url(#pq0)"/><rect x="8" y="2" width="5" height="1" fill="#ffffff"/><rect x="13" y="2" width="1" height="1" fill="#000000"/><rect x="14" y="2" width="2" height="1" fill="#000080"/><rect x="0" y="3" width="4" height="1" fill="#000000"/><rect x="4" y="3" width="5" height="1" fill="url(#pq0)"/><rect x="9" y="3" width="4" height="1" fill="#ffffff"/><rect x="13" y="3" width="1" height="1" fill="#000000"/><rect x="14" y="3" width="2" height="1" fill="#000080"/><rect x="0" y="4" width="1" height="1" fill="#000000"/><rect x="1" y="4" width="2" height="1" fill="#ffffff"/><rect x="3" y="4" width="6" height="1" fill="url(#pq0)"/><rect x="9" y="4" width="4" height="1" fill="#000000"/><rect x="14" y="4" width="2" height="1" fill="#000080"/><rect x="0" y="5" width="1" height="1" fill="#000000"/><rect x="1" y="5" width="1" height="1" fill="#ffffff"/><rect x="2" y="5" width="1" height="1" fill="#000000"/><rect x="3" y="5" width="1" height="1" fill="#ffffff"/><rect x="4" y="5" width="5" height="1" fill="url(#pq0)"/><rect x="14" y="5" width="2" height="1" fill="#000080"/><rect x="0" y="6" width="1" height="1" fill="#000000"/><rect x="1" y="6" width="5" height="1" fill="#ffffff"/><rect x="6" y="6" width="2" height="1" fill="url(#pq0)"/><rect x="8" y="6" width="1" height="1" fill="#000000"/><rect x="0" y="7" width="1" height="1" fill="#000000"/><rect x="1" y="7" width="6" height="1" fill="#ffffff"/><rect x="7" y="7" width="2" height="1" fill="#000000"/><rect x="10" y="7" width="1" height="1" fill="#000000"/><rect x="0" y="8" width="1" height="1" fill="#000000"/><rect x="1" y="8" width="11" height="1" fill="#ffffff"/><rect x="12" y="8" width="1" height="1" fill="#000000"/><rect x="0" y="9" width="1" height="1" fill="#000000"/><rect x="1" y="9" width="1" height="1" fill="#ffffff"/><rect x="2" y="9" width="2" height="1" fill="#000000"/><rect x="4" y="9" width="1" height="1" fill="#ffffff"/><rect x="5" y="9" width="5" height="1" fill="#000000"/><rect x="10" y="9" width="2" height="1" fill="#ffffff"/><rect x="12" y="9" width="1" height="1" fill="#000000"/><rect x="0" y="10" width="1" height="1" fill="#000000"/><rect x="1" y="10" width="11" height="1" fill="#ffffff"/><rect x="12" y="10" width="1" height="1" fill="#000000"/><rect x="0" y="11" width="1" height="1" fill="#000000"/><rect x="1" y="11" width="1" height="1" fill="#ffffff"/><rect x="2" y="11" width="2" height="1" fill="#000000"/><rect x="4" y="11" width="1" height="1" fill="#ffffff"/><rect x="5" y="11" width="5" height="1" fill="#000000"/><rect x="10" y="11" width="2" height="1" fill="#ffffff"/><rect x="12" y="11" width="1" height="1" fill="#000000"/><rect x="0" y="12" width="1" height="1" fill="#000000"/><rect x="1" y="12" width="11" height="1" fill="#ffffff"/><rect x="12" y="12" width="1" height="1" fill="#000000"/><rect x="0" y="13" width="13" height="1" fill="#000000"/></svg>
<svg style="left:205px;top:49px;" width="16" height="15" shape-rendering="crispEdges"><rect x="2" y="2" width="4" height="1" fill="#000080"/><rect x="2" y="3" width="1" height="1" fill="#000080"/><rect x="3" y="3" width="1" height="1" fill="#ffffc0"/><rect x="4" y="3" width="3" height="1" fill="#000080"/><rect x="2" y="4" width="1" height="1" fill="#000080"/><rect x="3" y="4" width="2" height="1" fill="#ffffc0"/><rect x="5" y="4" width="2" height="1" fill="#000080"/><rect x="2" y="5" width="2" height="1" fill="#000080"/><rect x="4" y="5" width="1" height="1" fill="#ffffc0"/><rect x="5" y="5" width="2" height="1" fill="#000080"/><rect x="2" y="6" width="5" height="1" fill="#000080"/><rect x="1" y="8" width="6" height="1" fill="#000000"/><rect x="10" y="8" width="4" height="1" fill="#000080"/><rect x="10" y="9" width="1" height="1" fill="#000080"/><rect x="11" y="9" width="1" height="1" fill="#ffffc0"/><rect x="12" y="9" width="3" height="1" fill="#000080"/><rect x="10" y="10" width="1" height="1" fill="#000080"/><rect x="11" y="10" width="2" height="1" fill="#ffffc0"/><rect x="13" y="10" width="2" height="1" fill="#000080"/><rect x="10" y="11" width="2" height="1" fill="#000080"/><rect x="12" y="11" width="1" height="1" fill="#ffffc0"/><rect x="13" y="11" width="2" height="1" fill="#000080"/><rect x="10" y="12" width="5" height="1" fill="#000080"/><rect x="9" y="14" width="6" height="1" fill="#000000"/></svg>
<svg style="left:229px;top:51px;" width="16" height="13" shape-rendering="crispEdges"><rect x="0" y="0" width="3" height="1" fill="#000080"/><rect x="4" y="0" width="3" height="1" fill="#000000"/><rect x="0" y="1" width="1" height="1" fill="#000080"/><rect x="1" y="1" width="1" height="1" fill="#ffffff"/><rect x="2" y="1" width="1" height="1" fill="#000080"/><rect x="0" y="2" width="3" height="1" fill="#000080"/><rect x="7" y="5" width="3" height="1" fill="#000080"/><rect x="11" y="5" width="3" height="1" fill="#000000"/><rect x="7" y="6" width="1" height="1" fill="#000080"/><rect x="8" y="6" width="1" height="1" fill="#ffffff"/><rect x="9" y="6" width="1" height="1" fill="#000080"/><rect x="7" y="7" width="3" height="1" fill="#000080"/><rect x="2" y="10" width="3" height="1" fill="#000080"/><rect x="6" y="10" width="3" height="1" fill="#000000"/><rect x="2" y="11" width="1" height="1" fill="#000080"/><rect x="3" y="11" width="1" height="1" fill="#ffffff"/><rect x="4" y="11" width="1" height="1" fill="#000080"/><rect x="2" y="12" width="3" height="1" fill="#000080"/></svg>
<svg style="left:251px;top:51px;" width="15" height="13" shape-rendering="crispEdges"><rect x="0" y="0" width="3" height="1" fill="#000080"/><rect x="4" y="0" width="3" height="1" fill="#000000"/><rect x="8" y="0" width="3" height="1" fill="#000080"/><rect x="12" y="0" width="3" height="1" fill="#000000"/><rect x="0" y="1" width="1" height="1" fill="#000080"/><rect x="1" y="1" width="1" height="1" fill="#ffffff"/><rect x="2" y="1" width="1" height="1" fill="#000080"/><rect x="8" y="1" width="1" height="1" fill="#000080"/><rect x="9" y="1" width="1" height="1" fill="#ffffff"/><rect x="10" y="1" width="1" height="1" fill="#000080"/><rect x="0" y="2" width="3" height="1" fill="#000080"/><rect x="8" y="2" width="3" height="1" fill="#000080"/><rect x="0" y="5" width="3" height="1" fill="#000080"/><rect x="4" y="5" width="3" height="1" fill="#000000"/><rect x="8" y="5" width="3" height="1" fill="#000080"/><rect x="12" y="5" width="3" height="1" fill="#000000"/><rect x="0" y="6" width="1" height="1" fill="#000080"/><rect x="1" y="6" width="1" height="1" fill="#ffffff"/><rect x="2" y="6" width="1" height="1" fill="#000080"/><rect x="8" y="6" width="1" height="1" fill="#000080"/><rect x="9" y="6" width="1" height="1" fill="#ffffff"/><rect x="10" y="6" width="1" height="1" fill="#000080"/><rect x="0" y="7" width="3" height="1" fill="#000080"/><rect x="8" y="7" width="3" height="1" fill="#000080"/><rect x="0" y="10" width="3" height="1" fill="#000080"/><rect x="4" y="10" width="3" height="1" fill="#000000"/><rect x="8" y="10" width="3" height="1" fill="#000080"/><rect x="12" y="10" width="3" height="1" fill="#000000"/><rect x="0" y="11" width="1" height="1" fill="#000080"/><rect x="1" y="11" width="1" height="1" fill="#ffffff"/><rect x="2" y="11" width="1" height="1" fill="#000080"/><rect x="8" y="11" width="1" height="1" fill="#000080"/><rect x="9" y="11" width="1" height="1" fill="#ffffff"/><rect x="10" y="11" width="1" height="1" fill="#000080"/><rect x="0" y="12" width="3" height="1" fill="#000080"/><rect x="8" y="12" width="3" height="1" fill="#000080"/></svg>
<svg style="left:275px;top:52px;" width="17" height="13" shape-rendering="crispEdges"><rect x="3" y="0" width="4" height="1" fill="#000000"/><rect x="8" y="0" width="4" height="1" fill="#000000"/><rect x="13" y="0" width="4" height="1" fill="#000000"/><rect x="0" y="2" width="17" height="1" fill="#000080"/><rect x="0" y="4" width="1" height="1" fill="#000080"/><rect x="3" y="4" width="4" height="1" fill="#000000"/><rect x="8" y="4" width="4" height="1" fill="#000000"/><rect x="13" y="4" width="4" height="1" fill="#000000"/><rect x="0" y="6" width="1" height="1" fill="#000080"/><rect x="3" y="6" width="4" height="1" fill="#000000"/><rect x="8" y="6" width="4" height="1" fill="#000000"/><rect x="13" y="6" width="4" height="1" fill="#000000"/><rect x="0" y="8" width="1" height="1" fill="#000080"/><rect x="3" y="8" width="4" height="1" fill="#000000"/><rect x="8" y="8" width="4" height="1" fill="#000000"/><rect x="13" y="8" width="4" height="1" fill="#000000"/><rect x="0" y="10" width="1" height="1" fill="#000080"/><rect x="3" y="10" width="4" height="1" fill="#000000"/><rect x="8" y="10" width="4" height="1" fill="#000000"/><rect x="13" y="10" width="4" height="1" fill="#000000"/><rect x="0" y="12" width="1" height="1" fill="#000080"/><rect x="3" y="12" width="4" height="1" fill="#000000"/><rect x="8" y="12" width="4" height="1" fill="#000000"/><rect x="13" y="12" width="4" height="1" fill="#000000"/></svg>
<div style="left:4px;top:72px;width:257px;height:1px;background:#000;"></div>
<div style="left:4px;top:72px;width:1px;height:362px;background:#000;"></div>
<div style="left:4px;top:433px;width:258px;height:1px;background:#fff;"></div>
<div style="left:261px;top:71px;width:1px;height:363px;background:#fff;"></div>
<div style="left:5px;top:73px;width:254px;height:1px;background:#808080;"></div>
<div style="left:5px;top:73px;width:1px;height:20px;background:#808080;"></div>
<div style="left:6px;top:74px;width:252px;height:1px;background:#000;"></div>
<div style="left:6px;top:74px;width:1px;height:19px;background:#000;"></div>
<div style="left:5px;top:92px;width:255px;height:1px;background:#fff;"></div>
<div style="left:259px;top:73px;width:1px;height:20px;background:#fff;"></div>
<div style="left:7px;top:75px;width:251px;height:1px;background:#dfdfdf;"></div>
<div style="left:7px;top:75px;width:1px;height:16px;background:#dfdfdf;"></div>
<div style="left:7px;top:95px;width:251px;height:335px;background:#fff;"></div>
<div style="left:5px;top:93px;width:255px;height:1px;background:#808080;"></div>
<div style="left:5px;top:93px;width:1px;height:339px;background:#808080;"></div>
<div style="left:6px;top:94px;width:253px;height:1px;background:#000;"></div>
<div style="left:6px;top:94px;width:1px;height:337px;background:#000;"></div>
<div style="left:5px;top:431px;width:255px;height:1px;background:#fff;"></div>
<div style="left:259px;top:93px;width:1px;height:339px;background:#fff;"></div>
<div style="left:6px;top:430px;width:253px;height:1px;background:#dfdfdf;"></div>
<div style="left:258px;top:94px;width:1px;height:337px;background:#dfdfdf;"></div>
<div style="left:11px;top:99px;width:9px;height:9px;background:#fff;box-sizing:border-box;border:1px solid #808080"></div>
<div style="left:13px;top:103px;width:5px;height:1px;background:#000;"></div>
<div style="left:21px;top:103px;width:5px;height:1px;background:transparent;background:repeating-linear-gradient(to right,#808080 0 1px,transparent 1px 2px)"></div>
<svg style="left:27px;top:96px;" width="14" height="14" shape-rendering="crispEdges"><rect x="2" y="0" width="12" height="1" fill="#000000"/><rect x="1" y="1" width="1" height="1" fill="#000000"/><rect x="2" y="1" width="10" height="1" fill="#ffffff"/><rect x="12" y="1" width="1" height="1" fill="#dfdfdf"/><rect x="13" y="1" width="1" height="1" fill="#000000"/><rect x="0" y="2" width="12" height="1" fill="#000000"/><rect x="12" y="2" width="1" height="1" fill="#ffffff"/><rect x="13" y="2" width="1" height="1" fill="#000000"/><rect x="0" y="3" width="1" height="1" fill="#000000"/><rect x="1" y="3" width="10" height="1" fill="#ffffff"/><rect x="11" y="3" width="1" height="1" fill="#000000"/><rect x="12" y="3" width="1" height="1" fill="#ffffff"/><rect x="13" y="3" width="1" height="1" fill="#000000"/><rect x="0" y="4" width="1" height="1" fill="#000000"/><rect x="1" y="4" width="2" height="1" fill="#ffffff"/><rect x="3" y="4" width="5" height="1" fill="#ffff00"/><rect x="8" y="4" width="3" height="1" fill="#ffffff"/><rect x="11" y="4" width="1" height="1" fill="#000000"/><rect x="12" y="4" width="1" height="1" fill="#ffffff"/><rect x="13" y="4" width="1" height="1" fill="#000000"/><rect x="0" y="5" width="1" height="1" fill="#000000"/><rect x="1" y="5" width="2" height="1" fill="#00ffff"/><rect x="3" y="5" width="2" height="1" fill="#ffff00"/><rect x="5" y="5" width="1" height="1" fill="#ffffff"/><rect x="6" y="5" width="2" height="1" fill="#ffff00"/><rect x="8" y="5" width="3" height="1" fill="#00ffff"/><rect x="11" y="5" width="1" height="1" fill="#000000"/><rect x="12" y="5" width="1" height="1" fill="#ffffff"/><rect x="13" y="5" width="1" height="1" fill="#000000"/><rect x="0" y="6" width="1" height="1" fill="#000000"/><rect x="1" y="6" width="3" height="1" fill="#000080"/><rect x="4" y="6" width="3" height="1" fill="#ffff00"/><rect x="7" y="6" width="4" height="1" fill="#000080"/><rect x="11" y="6" width="1" height="1" fill="#000000"/><rect x="12" y="6" width="1" height="1" fill="#ffffff"/><rect x="13" y="6" width="1" height="1" fill="#000000"/><rect x="0" y="7" width="1" height="1" fill="#000000"/><rect x="1" y="7" width="3" height="1" fill="#ffffff"/><rect x="4" y="7" width="2" height="1" fill="#ffff00"/><rect x="6" y="7" width="1" height="1" fill="#000080"/><rect x="7" y="7" width="4" height="1" fill="#ffffff"/><rect x="11" y="7" width="1" height="1" fill="#000000"/><rect x="12" y="7" width="1" height="1" fill="#ffffff"/><rect x="13" y="7" width="1" height="1" fill="#000000"/><rect x="0" y="8" width="1" height="1" fill="#000000"/><rect x="1" y="8" width="3" height="1" fill="#ffffff"/><rect x="4" y="8" width="2" height="1" fill="#ffff00"/><rect x="6" y="8" width="1" height="1" fill="#000080"/><rect x="7" y="8" width="4" height="1" fill="#ffffff"/><rect x="11" y="8" width="1" height="1" fill="#000000"/><rect x="12" y="8" width="1" height="1" fill="#ffffff"/><rect x="13" y="8" width="1" height="1" fill="#000000"/><rect x="0" y="9" width="1" height="1" fill="#000000"/><rect x="1" y="9" width="3" height="1" fill="#ffffff"/><rect x="4" y="9" width="2" height="1" fill="#ffff00"/><rect x="6" y="9" width="1" height="1" fill="#000080"/><rect x="7" y="9" width="4" height="1" fill="#ffffff"/><rect x="11" y="9" width="1" height="1" fill="#000000"/><rect x="12" y="9" width="1" height="1" fill="#ffffff"/><rect x="13" y="9" width="1" height="1" fill="#000000"/><rect x="0" y="10" width="1" height="1" fill="#000000"/><rect x="1" y="10" width="3" height="1" fill="#ffffff"/><rect x="4" y="10" width="2" height="1" fill="#00ffff"/><rect x="6" y="10" width="1" height="1" fill="#000080"/><rect x="7" y="10" width="4" height="1" fill="#ffffff"/><rect x="11" y="10" width="1" height="1" fill="#000000"/><rect x="12" y="10" width="1" height="1" fill="#ffffff"/><rect x="13" y="10" width="1" height="1" fill="#000000"/><rect x="0" y="11" width="1" height="1" fill="#000000"/><rect x="1" y="11" width="3" height="1" fill="#ffffff"/><rect x="4" y="11" width="2" height="1" fill="#00ffff"/><rect x="6" y="11" width="1" height="1" fill="#000080"/><rect x="7" y="11" width="4" height="1" fill="#ffffff"/><rect x="11" y="11" width="2" height="1" fill="#000000"/><rect x="0" y="12" width="1" height="1" fill="#000000"/><rect x="1" y="12" width="5" height="1" fill="#ffffff"/><rect x="6" y="12" width="1" height="1" fill="#000080"/><rect x="7" y="12" width="4" height="1" fill="#ffffff"/><rect x="11" y="12" width="1" height="1" fill="#000000"/><rect x="0" y="13" width="12" height="1" fill="#000000"/></svg>
<div style="left:34px;top:110px;width:1px;height:5px;background:transparent;background:repeating-linear-gradient(to bottom,#808080 0 1px,transparent 1px 2px)"></div>
<div style="left:34px;top:124px;width:1px;height:124px;background:transparent;background:repeating-linear-gradient(to bottom,#808080 0 1px,transparent 1px 2px)"></div>
<div style="left:30px;top:115px;width:9px;height:9px;background:#fff;box-sizing:border-box;border:1px solid #808080"></div>
<div style="left:32px;top:119px;width:5px;height:1px;background:#000;"></div>
<div style="left:39px;top:119px;width:7px;height:1px;background:transparent;background:repeating-linear-gradient(to right,#808080 0 1px,transparent 1px 2px)"></div>
<svg style="left:45px;top:111px" width="16" height="15" shape-rendering="crispEdges"><use href="#s2"/></svg>
<div style="left:53px;top:127px;width:1px;height:105px;background:transparent;background:repeating-linear-gradient(to bottom,#808080 0 1px,transparent 1px 2px)"></div>
<div style="left:55px;top:135px;width:9px;height:1px;background:transparent;background:repeating-linear-gradient(to right,#808080 0 1px,transparent 1px 2px)"></div>
<svg style="left:64px;top:127px" width="16" height="15" shape-rendering="crispEdges"><use href="#s3"/></svg>
<div style="left:55px;top:151px;width:9px;height:1px;background:transparent;background:repeating-linear-gradient(to right,#808080 0 1px,transparent 1px 2px)"></div>
<svg style="left:64px;top:143px" width="16" height="15" shape-rendering="crispEdges"><use href="#s3"/></svg>
<div style="left:55px;top:167px;width:9px;height:1px;background:transparent;background:repeating-linear-gradient(to right,#808080 0 1px,transparent 1px 2px)"></div>
<svg style="left:64px;top:159px" width="16" height="15" shape-rendering="crispEdges"><use href="#s3"/></svg>
<div style="left:55px;top:183px;width:9px;height:1px;background:transparent;background:repeating-linear-gradient(to right,#808080 0 1px,transparent 1px 2px)"></div>
<svg style="left:64px;top:175px" width="16" height="15" shape-rendering="crispEdges"><use href="#s3"/></svg>
<div style="left:55px;top:199px;width:9px;height:1px;background:transparent;background:repeating-linear-gradient(to right,#808080 0 1px,transparent 1px 2px)"></div>
<svg style="left:64px;top:191px" width="16" height="15" shape-rendering="crispEdges"><use href="#s3"/></svg>
<div style="left:55px;top:215px;width:9px;height:1px;background:transparent;background:repeating-linear-gradient(to right,#808080 0 1px,transparent 1px 2px)"></div>
<svg style="left:64px;top:207px" width="16" height="15" shape-rendering="crispEdges"><use href="#s3"/></svg>
<div style="left:55px;top:231px;width:9px;height:1px;background:transparent;background:repeating-linear-gradient(to right,#808080 0 1px,transparent 1px 2px)"></div>
<svg style="left:64px;top:223px" width="16" height="15" shape-rendering="crispEdges"><use href="#s3"/></svg>
<div style="left:83px;top:223px;width:63px;height:14px;background:#000080;"></div>
<div style="left:83px;top:223px;width:63px;height:14px;box-sizing:border-box;border:1px dotted #ffff7f"></div>
<div style="left:35px;top:247px;width:11px;height:1px;background:transparent;background:repeating-linear-gradient(to right,#808080 0 1px,transparent 1px 2px)"></div>
<svg style="left:45px;top:239px" width="16" height="15" shape-rendering="crispEdges"><use href="#s2"/></svg>
<div style="left:265px;top:71px;width:375px;height:1px;background:#808080;"></div>
<div style="left:265px;top:71px;width:1px;height:363px;background:#808080;"></div>
<div style="left:266px;top:72px;width:373px;height:1px;background:#000;"></div>
<div style="left:266px;top:72px;width:1px;height:361px;background:#000;"></div>
<div style="left:265px;top:433px;width:375px;height:1px;background:#fff;"></div>
<div style="left:639px;top:71px;width:1px;height:362px;background:#dfdfdf;"></div>
<div style="left:266px;top:432px;width:373px;height:1px;background:#dfdfdf;"></div>
<div style="left:267px;top:73px;width:372px;height:1px;background:#808080;"></div>
<div style="left:267px;top:73px;width:1px;height:20px;background:#808080;"></div>
<div style="left:268px;top:74px;width:370px;height:1px;background:#000;"></div>
<div style="left:268px;top:74px;width:1px;height:18px;background:#000;"></div>
<div style="left:269px;top:75px;width:368px;height:1px;background:#dfdfdf;"></div>
<div style="left:269px;top:75px;width:1px;height:16px;background:#dfdfdf;"></div>
<div style="left:267px;top:92px;width:372px;height:1px;background:#fff;"></div>
<div style="left:638px;top:73px;width:1px;height:20px;background:#fff;"></div>
<div style="left:267px;top:93px;width:186px;height:17px;background:#c0c0c0;"></div>
<div style="left:267px;top:93px;width:186px;height:1px;background:#fff;"></div>
<div style="left:267px;top:93px;width:1px;height:17px;background:#fff;"></div>
<div style="left:267px;top:109px;width:186px;height:1px;background:#000;"></div>
<div style="left:452px;top:93px;width:1px;height:17px;background:#000;"></div>
<div style="left:268px;top:108px;width:184px;height:1px;background:#808080;"></div>
<div style="left:451px;top:94px;width:1px;height:15px;background:#808080;"></div>
<div style="left:453px;top:93px;width:186px;height:17px;background:#c0c0c0;"></div>
<div style="left:453px;top:93px;width:186px;height:1px;background:#fff;"></div>
<div style="left:453px;top:93px;width:1px;height:17px;background:#fff;"></div>
<div style="left:453px;top:109px;width:186px;height:1px;background:#000;"></div>
<div style="left:638px;top:93px;width:1px;height:17px;background:#000;"></div>
<div style="left:454px;top:108px;width:184px;height:1px;background:#808080;"></div>
<div style="left:637px;top:94px;width:1px;height:15px;background:#808080;"></div>
<div style="left:267px;top:110px;width:356px;height:306px;background:#fff;"></div>
<svg style="left:270px;top:110px" width="16" height="15" shape-rendering="crispEdges"><use href="#s4"/></svg>
<svg style="left:270px;top:127px" width="16" height="15" shape-rendering="crispEdges"><use href="#s5"/></svg>
<svg style="left:270px;top:144px" width="16" height="15" shape-rendering="crispEdges"><use href="#s4"/></svg>
<svg style="left:270px;top:161px" width="16" height="15" shape-rendering="crispEdges"><use href="#s5"/></svg>
<svg style="left:270px;top:178px" width="16" height="15" shape-rendering="crispEdges"><use href="#s4"/></svg>
<svg style="left:270px;top:195px" width="16" height="15" shape-rendering="crispEdges"><use href="#s5"/></svg>
<svg style="left:270px;top:212px" width="16" height="15" shape-rendering="crispEdges"><use href="#s4"/></svg>
<svg style="left:270px;top:229px" width="16" height="15" shape-rendering="crispEdges"><use href="#s5"/></svg>
<svg style="left:270px;top:246px" width="16" height="15" shape-rendering="crispEdges"><use href="#s4"/></svg>
<svg style="left:270px;top:263px" width="16" height="15" shape-rendering="crispEdges"><use href="#s5"/></svg>
<svg style="left:270px;top:280px" width="16" height="15" shape-rendering="crispEdges"><use href="#s4"/></svg>
<svg style="left:270px;top:297px" width="16" height="15" shape-rendering="crispEdges"><use href="#s5"/></svg>
<svg style="left:270px;top:314px" width="16" height="15" shape-rendering="crispEdges"><use href="#s4"/></svg>
<svg style="left:270px;top:331px" width="16" height="15" shape-rendering="crispEdges"><use href="#s5"/></svg>
<svg style="left:270px;top:348px" width="16" height="15" shape-rendering="crispEdges"><use href="#s4"/></svg>
<svg style="left:270px;top:365px" width="16" height="15" shape-rendering="crispEdges"><use href="#s5"/></svg>
<svg style="left:270px;top:382px" width="16" height="15" shape-rendering="crispEdges"><use href="#s4"/></svg>
<svg style="left:270px;top:399px" width="16" height="15" shape-rendering="crispEdges"><use href="#s5"/></svg>
<div style="left:623px;top:93px;width:16px;height:17px;background:#c0c0c0;"></div>
<div style="left:623px;top:93px;width:16px;height:1px;background:#dfdfdf;"></div>
<div style="left:623px;top:93px;width:1px;height:17px;background:#dfdfdf;"></div>
<div style="left:624px;top:94px;width:14px;height:1px;background:#fff;"></div>
<div style="left:624px;top:94px;width:1px;height:15px;background:#fff;"></div>
<div style="left:623px;top:109px;width:16px;height:1px;background:#000;"></div>
<div style="left:638px;top:93px;width:1px;height:17px;background:#000;"></div>
<div style="left:624px;top:108px;width:14px;height:1px;background:#808080;"></div>
<div style="left:637px;top:94px;width:1px;height:15px;background:#808080;"></div>
<div style="left:623px;top:110px;width:16px;height:261px;background:#c0c0c0;"></div>
<div style="left:623px;top:110px;width:16px;height:1px;background:#dfdfdf;"></div>
<div style="left:623px;top:110px;width:1px;height:261px;background:#dfdfdf;"></div>
<div style="left:624px;top:111px;width:14px;height:1px;background:#fff;"></div>
<div style="left:624px;top:111px;width:1px;height:259px;background:#fff;"></div>
<div style="left:623px;top:370px;width:16px;height:1px;background:#000;"></div>
<div style="left:638px;top:110px;width:1px;height:261px;background:#000;"></div>
<div style="left:624px;top:369px;width:14px;height:1px;background:#808080;"></div>
<div style="left:637px;top:111px;width:1px;height:259px;background:#808080;"></div>
<svg style="left:623px;top:371px" width="16" height="29" shape-rendering="crispEdges"><rect width="16" height="29" fill="url(#pW0)"/></svg>
<div style="left:623px;top:400px;width:16px;height:16px;background:#c0c0c0;"></div>
<div style="left:623px;top:400px;width:16px;height:1px;background:#dfdfdf;"></div>
<div style="left:623px;top:400px;width:1px;height:16px;background:#dfdfdf;"></div>
<div style="left:624px;top:401px;width:14px;height:1px;background:#fff;"></div>
<div style="left:624px;top:401px;width:1px;height:14px;background:#fff;"></div>
<div style="left:623px;top:415px;width:16px;height:1px;background:#000;"></div>
<div style="left:638px;top:400px;width:1px;height:16px;background:#000;"></div>
<div style="left:624px;top:414px;width:14px;height:1px;background:#808080;"></div>
<div style="left:637px;top:401px;width:1px;height:14px;background:#808080;"></div>
<div style="left:623px;top:416px;width:16px;height:16px;background:#c0c0c0;"></div>
<svg style="left:627px;top:99px;" width="7" height="4" shape-rendering="crispEdges"><rect x="3" y="0" width="1" height="1" fill="#000000"/><rect x="2" y="1" width="3" height="1" fill="#000000"/><rect x="1" y="2" width="5" height="1" fill="#000000"/><rect x="0" y="3" width="7" height="1" fill="#000000"/></svg>
<svg style="left:627px;top:405px;" width="7" height="4" shape-rendering="crispEdges"><rect x="0" y="0" width="7" height="1" fill="#000000"/><rect x="1" y="1" width="5" height="1" fill="#000000"/><rect x="2" y="2" width="3" height="1" fill="#000000"/><rect x="3" y="3" width="1" height="1" fill="#000000"/></svg>
<div style="left:267px;top:416px;width:16px;height:16px;background:#c0c0c0;"></div>
<div style="left:267px;top:416px;width:16px;height:1px;background:#dfdfdf;"></div>
<div style="left:267px;top:416px;width:1px;height:16px;background:#dfdfdf;"></div>
<div style="left:268px;top:417px;width:14px;height:1px;background:#fff;"></div>
<div style="left:268px;top:417px;width:1px;height:14px;background:#fff;"></div>
<div style="left:267px;top:431px;width:16px;height:1px;background:#000;"></div>
<div style="left:282px;top:416px;width:1px;height:16px;background:#000;"></div>
<div style="left:268px;top:430px;width:14px;height:1px;background:#808080;"></div>
<div style="left:281px;top:417px;width:1px;height:14px;background:#808080;"></div>
<div style="left:283px;top:416px;width:310px;height:16px;background:#c0c0c0;"></div>
<div style="left:283px;top:416px;width:310px;height:1px;background:#dfdfdf;"></div>
<div style="left:283px;top:416px;width:1px;height:16px;background:#dfdfdf;"></div>
<div style="left:284px;top:417px;width:308px;height:1px;background:#fff;"></div>
<div style="left:284px;top:417px;width:1px;height:14px;background:#fff;"></div>
<div style="left:283px;top:431px;width:310px;height:1px;background:#000;"></div>
<div style="left:592px;top:416px;width:1px;height:16px;background:#000;"></div>
<div style="left:284px;top:430px;width:308px;height:1px;background:#808080;"></div>
<div style="left:591px;top:417px;width:1px;height:14px;background:#808080;"></div>
<svg style="left:593px;top:416px" width="14" height="16" shape-rendering="crispEdges"><rect width="14" height="16" fill="url(#pW1)"/></svg>
<div style="left:607px;top:416px;width:16px;height:16px;background:#c0c0c0;"></div>
<div style="left:607px;top:416px;width:16px;height:1px;background:#dfdfdf;"></div>
<div style="left:607px;top:416px;width:1px;height:16px;background:#dfdfdf;"></div>
<div style="left:608px;top:417px;width:14px;height:1px;background:#fff;"></div>
<div style="left:608px;top:417px;width:1px;height:14px;background:#fff;"></div>
<div style="left:607px;top:431px;width:16px;height:1px;background:#000;"></div>
<div style="left:622px;top:416px;width:1px;height:16px;background:#000;"></div>
<div style="left:608px;top:430px;width:14px;height:1px;background:#808080;"></div>
<div style="left:621px;top:417px;width:1px;height:14px;background:#808080;"></div>
<svg style="left:272px;top:420px;" width="4" height="7" shape-rendering="crispEdges"><rect x="3" y="0" width="1" height="1" fill="#000000"/><rect x="2" y="1" width="2" height="1" fill="#000000"/><rect x="1" y="2" width="3" height="1" fill="#000000"/><rect x="0" y="3" width="4" height="1" fill="#000000"/><rect x="1" y="4" width="3" height="1" fill="#000000"/><rect x="2" y="5" width="2" height="1" fill="#000000"/><rect x="3" y="6" width="1" height="1" fill="#000000"/></svg>
<svg style="left:613px;top:420px;" width="4" height="7" shape-rendering="crispEdges"><rect x="0" y="0" width="1" height="1" fill="#000000"/><rect x="0" y="1" width="2" height="1" fill="#000000"/><rect x="0" y="2" width="3" height="1" fill="#000000"/><rect x="0" y="3" width="4" height="1" fill="#000000"/><rect x="0" y="4" width="3" height="1" fill="#000000"/><rect x="0" y="5" width="2" height="1" fill="#000000"/><rect x="0" y="6" width="1" height="1" fill="#000000"/></svg>
<div style="left:4px;top:436px;width:636px;height:1px;background:#000;"></div>
<div style="left:4px;top:437px;width:1px;height:17px;background:#808080;"></div>
<div style="left:4px;top:453px;width:30px;height:1px;background:#fff;"></div>
<div style="left:36px;top:453px;width:592px;height:1px;background:#fff;"></div>
<div style="left:639px;top:437px;width:1px;height:4px;background:#fff;"></div>
<div style="left:33px;top:437px;width:1px;height:17px;background:#fff;"></div>
<div style="left:34px;top:437px;width:1px;height:17px;background:#c0c0c0;"></div>
<div style="left:35px;top:437px;width:1px;height:17px;background:#c0c0c0;"></div>
<div style="left:36px;top:437px;width:1px;height:17px;background:#808080;"></div>
<svg style="left:627px;top:440px;" width="13" height="14" shape-rendering="crispEdges"><rect x="12" y="1" width="1" height="1" fill="#ffffff"/><rect x="11" y="2" width="1" height="1" fill="#ffffff"/><rect x="12" y="2" width="1" height="1" fill="#808080"/><rect x="10" y="3" width="1" height="1" fill="#ffffff"/><rect x="11" y="3" width="2" height="1" fill="#808080"/><rect x="9" y="4" width="1" height="1" fill="#ffffff"/><rect x="10" y="4" width="2" height="1" fill="#808080"/><rect x="8" y="5" width="1" height="1" fill="#ffffff"/><rect x="9" y="5" width="2" height="1" fill="#808080"/><rect x="12" y="5" width="1" height="1" fill="#ffffff"/><rect x="7" y="6" width="1" height="1" fill="#ffffff"/><rect x="8" y="6" width="2" height="1" fill="#808080"/><rect x="11" y="6" width="1" height="1" fill="#ffffff"/><rect x="12" y="6" width="1" height="1" fill="#808080"/><rect x="6" y="7" width="1" height="1" fill="#ffffff"/><rect x="7" y="7" width="2" height="1" fill="#808080"/><rect x="10" y="7" width="1" height="1" fill="#ffffff"/><rect x="11" y="7" width="2" height="1" fill="#808080"/><rect x="5" y="8" width="1" height="1" fill="#ffffff"/><rect x="6" y="8" width="2" height="1" fill="#808080"/><rect x="9" y="8" width="1" height="1" fill="#ffffff"/><rect x="10" y="8" width="2" height="1" fill="#808080"/><rect x="4" y="9" width="1" height="1" fill="#ffffff"/><rect x="5" y="9" width="2" height="1" fill="#808080"/><rect x="8" y="9" width="1" height="1" fill="#ffffff"/><rect x="9" y="9" width="2" height="1" fill="#808080"/><rect x="12" y="9" width="1" height="1" fill="#ffffff"/><rect x="3" y="10" width="1" height="1" fill="#ffffff"/><rect x="4" y="10" width="2" height="1" fill="#808080"/><rect x="7" y="10" width="1" height="1" fill="#ffffff"/><rect x="8" y="10" width="2" height="1" fill="#808080"/><rect x="11" y="10" width="1" height="1" fill="#ffffff"/><rect x="12" y="10" width="1" height="1" fill="#808080"/><rect x="2" y="11" width="1" height="1" fill="#ffffff"/><rect x="3" y="11" width="2" height="1" fill="#808080"/><rect x="6" y="11" width="1" height="1" fill="#ffffff"/><rect x="7" y="11" width="2" height="1" fill="#808080"/><rect x="10" y="11" width="1" height="1" fill="#ffffff"/><rect x="11" y="11" width="2" height="1" fill="#808080"/><rect x="1" y="12" width="1" height="1" fill="#ffffff"/><rect x="2" y="12" width="2" height="1" fill="#808080"/><rect x="5" y="12" width="1" height="1" fill="#ffffff"/><rect x="6" y="12" width="2" height="1" fill="#808080"/><rect x="9" y="12" width="1" height="1" fill="#ffffff"/><rect x="10" y="12" width="2" height="1" fill="#808080"/><rect x="0" y="13" width="1" height="1" fill="#ffffff"/><rect x="1" y="13" width="2" height="1" fill="#808080"/><rect x="4" y="13" width="1" height="1" fill="#ffffff"/><rect x="5" y="13" width="2" height="1" fill="#808080"/><rect x="8" y="13" width="1" height="1" fill="#ffffff"/><rect x="9" y="13" width="2" height="1" fill="#808080"/><rect x="12" y="13" width="1" height="1" fill="#ffffff"/></svg>
<svg style="left:0;top:0;width:0;height:0"><filter id="crisp" x="0" y="0" width="100%" height="100%"><feComponentTransfer><feFuncA type="linear" slope="2.2" intercept="-0.35"/></feComponentTransfer></filter></svg>
<div id="txt" style="left:0;top:0;width:644px;height:458px;filter:url(#crisp)">
<span class="t" style="left:25px;top:7.04px;font-size:11px;font-weight:bold;color:#fff;letter-spacing:0.5px;">DNS Server Configuration - S44r7480</span>
<span class="t" style="left:10px;top:25.59px;font-size:11.5px;font-weight:normal;color:#000;transform:scaleX(0.918);"><u>F</u>ile</span>
<span class="t" style="left:38px;top:25.59px;font-size:11.5px;font-weight:normal;color:#000;transform:scaleX(0.918);"><u>V</u>iew</span>
<span class="t" style="left:73px;top:25.59px;font-size:11.5px;font-weight:normal;color:#000;transform:scaleX(0.918);"><u>H</u>elp</span>
<span class="t" style="left:9px;top:76.59px;font-size:11.5px;font-weight:normal;color:#000;transform:scaleX(0.918);">Current Configuration</span>
<span class="t" style="left:47px;top:96.59px;font-size:11.5px;font-weight:normal;color:#000;transform:scaleX(0.918);">DNS Server - S44r7480</span>
<span class="t" style="left:66px;top:112.59px;font-size:11.5px;font-weight:normal;color:#000;transform:scaleX(0.918);">Primary Domains</span>
<span class="t" style="left:86px;top:128.59px;font-size:11.5px;font-weight:normal;color:#000;transform:scaleX(0.918);">0.0.127.in-addr.arpa.</span>
<span class="t" style="left:86px;top:144.59px;font-size:11.5px;font-weight:normal;color:#000;transform:scaleX(0.918);">1.1.10.in-addr.arpa.</span>
<span class="t" style="left:86px;top:160.59px;font-size:11.5px;font-weight:normal;color:#000;transform:scaleX(0.918);">1.3.10.in-addr.arpa.</span>
<span class="t" style="left:86px;top:176.59px;font-size:11.5px;font-weight:normal;color:#000;transform:scaleX(0.918);">10.10.10.in-addr.arpa.</span>
<span class="t" style="left:86px;top:192.59px;font-size:11.5px;font-weight:normal;color:#000;transform:scaleX(0.918);">2.3.10.in-addr.arpa.</span>
<span class="t" style="left:86px;top:208.59px;font-size:11.5px;font-weight:normal;color:#000;transform:scaleX(0.918);">3.3.10.in-addr.arpa.</span>
<span class="t" style="left:86px;top:224.59px;font-size:11.5px;font-weight:normal;color:#fff;transform:scaleX(0.918);">volubis.intra.</span>
<span class="t" style="left:66px;top:240.59px;font-size:11.5px;font-weight:normal;color:#000;transform:scaleX(0.918);">Secondary Domains</span>
<span class="t" style="left:271px;top:76.59px;font-size:11.5px;font-weight:normal;color:#000;transform:scaleX(0.918);">Contents of&nbsp; DNS Server - S44r7480</span>
<span class="t" style="left:273px;top:95.59px;font-size:11.5px;font-weight:normal;color:#000;transform:scaleX(0.918);">Host Name</span>
<span class="t" style="left:459px;top:95.59px;font-size:11.5px;font-weight:normal;color:#000;transform:scaleX(0.918);">IP Address</span>
<span class="t" style="left:288px;top:112.59px;font-size:11.5px;font-weight:normal;color:#000;transform:scaleX(0.918);">cisco.volubis.intra.</span>
<span class="t" style="left:459px;top:112.59px;font-size:11.5px;font-weight:normal;color:#000;transform:scaleX(0.918);">10.1.1.10</span>
<span class="t" style="left:288px;top:129.59px;font-size:11.5px;font-weight:normal;color:#000;transform:scaleX(0.918);">formation.volubis.intra.</span>
<span class="t" style="left:459px;top:129.59px;font-size:11.5px;font-weight:normal;color:#000;transform:scaleX(0.918);">10.10.10.10</span>
<span class="t" style="left:288px;top:146.59px;font-size:11.5px;font-weight:normal;color:#000;transform:scaleX(0.918);">linux.volubis.intra.</span>
<span class="t" style="left:459px;top:146.59px;font-size:11.5px;font-weight:normal;color:#000;transform:scaleX(0.918);">10.3.1.9</span>
<span class="t" style="left:288px;top:163.59px;font-size:11.5px;font-weight:normal;color:#000;transform:scaleX(0.918);">linux2.volubis.intra.</span>
<span class="t" style="left:459px;top:163.59px;font-size:11.5px;font-weight:normal;color:#000;transform:scaleX(0.918);">10.3.1.10</span>
<span class="t" style="left:288px;top:180.59px;font-size:11.5px;font-weight:normal;color:#000;transform:scaleX(0.918);">ns01.volubis.intra.</span>
<span class="t" style="left:459px;top:180.59px;font-size:11.5px;font-weight:normal;color:#000;transform:scaleX(0.918);">10.3.2.1</span>
<span class="t" style="left:288px;top:197.59px;font-size:11.5px;font-weight:normal;color:#000;transform:scaleX(0.918);">pc95.volubis.intra.</span>
<span class="t" style="left:459px;top:197.59px;font-size:11.5px;font-weight:normal;color:#000;transform:scaleX(0.918);">10.3.1.3</span>
<span class="t" style="left:288px;top:214.59px;font-size:11.5px;font-weight:normal;color:#000;transform:scaleX(0.918);">pc9501.volubis.intra.</span>
<span class="t" style="left:459px;top:214.59px;font-size:11.5px;font-weight:normal;color:#000;transform:scaleX(0.918);">10.3.1.11</span>
<span class="t" style="left:288px;top:231.59px;font-size:11.5px;font-weight:normal;color:#000;transform:scaleX(0.918);">pc9502.volubis.intra.</span>
<span class="t" style="left:459px;top:231.59px;font-size:11.5px;font-weight:normal;color:#000;transform:scaleX(0.918);">10.3.1.12</span>
<span class="t" style="left:288px;top:248.59px;font-size:11.5px;font-weight:normal;color:#000;transform:scaleX(0.918);">pc98.volubis.intra.</span>
<span class="t" style="left:459px;top:248.59px;font-size:11.5px;font-weight:normal;color:#000;transform:scaleX(0.918);">10.3.1.13</span>
<span class="t" style="left:288px;top:265.59px;font-size:11.5px;font-weight:normal;color:#000;transform:scaleX(0.918);">pc98tse.volubis.intra.</span>
<span class="t" style="left:459px;top:265.59px;font-size:11.5px;font-weight:normal;color:#000;transform:scaleX(0.918);">10.1.1.16</span>
<span class="t" style="left:288px;top:282.59px;font-size:11.5px;font-weight:normal;color:#000;transform:scaleX(0.918);">pcaf4.volubis.intra.</span>
<span class="t" style="left:459px;top:282.59px;font-size:11.5px;font-weight:normal;color:#000;transform:scaleX(0.918);">10.3.1.2</span>
<span class="t" style="left:288px;top:299.59px;font-size:11.5px;font-weight:normal;color:#000;transform:scaleX(0.918);">pcform.volubis.intra.</span>
<span class="t" style="left:459px;top:299.59px;font-size:11.5px;font-weight:normal;color:#000;transform:scaleX(0.918);">10.3.1.4</span>
<span class="t" style="left:288px;top:316.59px;font-size:11.5px;font-weight:normal;color:#000;transform:scaleX(0.918);">pcnt01.volubis.intra.</span>
<span class="t" style="left:459px;top:316.59px;font-size:11.5px;font-weight:normal;color:#000;transform:scaleX(0.918);">10.3.1.6</span>
<span class="t" style="left:288px;top:333.59px;font-size:11.5px;font-weight:normal;color:#000;transform:scaleX(0.918);">pcnt02.volubis.intra.</span>
<span class="t" style="left:459px;top:333.59px;font-size:11.5px;font-weight:normal;color:#000;transform:scaleX(0.918);">10.3.1.7</span>
<span class="t" style="left:288px;top:350.59px;font-size:11.5px;font-weight:normal;color:#000;transform:scaleX(0.918);">pcos02.volubis.intra.</span>
<span class="t" style="left:459px;top:350.59px;font-size:11.5px;font-weight:normal;color:#000;transform:scaleX(0.918);">10.3.1.8</span>
<span class="t" style="left:288px;top:367.59px;font-size:11.5px;font-weight:normal;color:#000;transform:scaleX(0.918);">portable.volubis.intra.</span>
<span class="t" style="left:459px;top:367.59px;font-size:11.5px;font-weight:normal;color:#000;transform:scaleX(0.918);">10.3.3.1</span>
<span class="t" style="left:288px;top:384.59px;font-size:11.5px;font-weight:normal;color:#000;transform:scaleX(0.918);">redhat.volubis.intra.</span>
<span class="t" style="left:459px;top:384.59px;font-size:11.5px;font-weight:normal;color:#000;transform:scaleX(0.918);">10.3.1.14</span>
<span class="t" style="left:288px;top:401.59px;font-size:11.5px;font-weight:normal;color:#000;transform:scaleX(0.918);">s44r7480.volubis.intra.</span>
<span class="t" style="left:459px;top:401.59px;font-size:11.5px;font-weight:normal;color:#000;transform:scaleX(0.918);">10.3.1.1</span>
</div>
</body></html>
